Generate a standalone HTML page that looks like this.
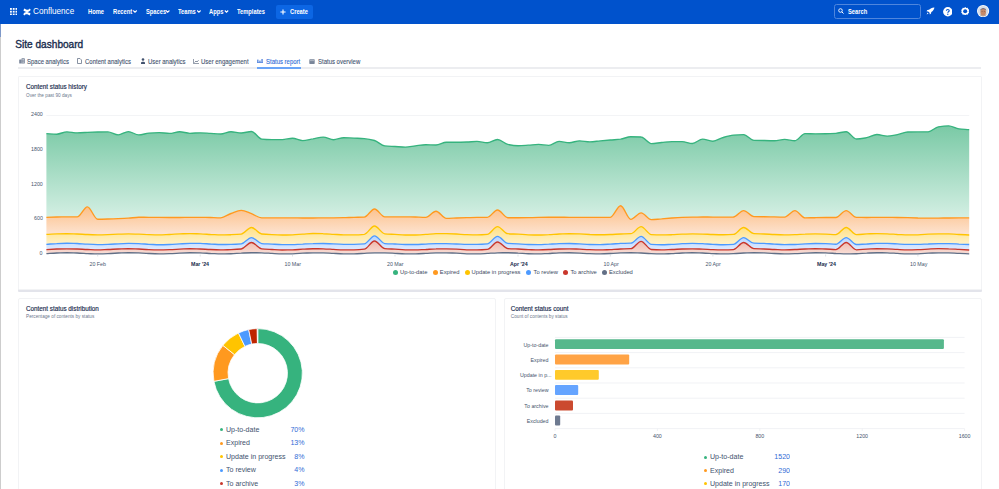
<!DOCTYPE html>
<html><head><meta charset="utf-8">
<style>
*{margin:0;padding:0;box-sizing:border-box}
html,body{width:999px;height:489px;overflow:hidden;background:#fff;font-family:"Liberation Sans",sans-serif;position:relative}
.a{position:absolute;white-space:nowrap}
#hdr{left:0;top:0;width:999px;height:24px;background:#0052CC}
.nav{color:#fff;font-weight:bold;font-size:6.6px;top:8px;line-height:8px;transform:scaleX(.87);transform-origin:0 0}
.card{background:#fff;border:1px solid #F2F3F5;border-radius:2px}
.ttl{font-size:6.3px;color:#172B4D;line-height:8px;-webkit-text-stroke:0.15px #172B4D}
.sub{font-size:4.7px;color:#6B778C;line-height:6px}
.tab{font-size:6.3px;color:#44546F;top:58px;line-height:8px;-webkit-text-stroke:0.1px currentColor;transform:scaleX(.95);transform-origin:0 0}
.ax{font-size:5.3px;color:#46546C;line-height:6px}
.lg{font-size:5.8px;color:#3B4A63;line-height:7px}
.dot{width:5px;height:5px;border-radius:50%}
.l2{font-size:7.5px;color:#42526E;line-height:9px;transform:scaleX(.94);transform-origin:0 0}
.pc{font-size:7.5px;color:#2F6BD6;line-height:9px;text-align:right;transform:scaleX(.94);transform-origin:100% 0}
.sd{width:3px;height:3px;border-radius:50%}
</style></head><body>
<div class="a" style="left:0;top:24px;width:1.2px;height:13px;background:#7E98C8"></div><div class="a" style="left:0;top:37px;width:1.2px;height:452px;background:#CDCDCD"></div>
<div id="hdr" class="a">
  <!-- grid icon -->
  <svg class="a" style="left:9.8px;top:7.8px" width="7.4" height="7.4" viewBox="0 0 8 8" fill="#fff">
    <rect x="0" y="0" width="2" height="2"/><rect x="3" y="0" width="2" height="2"/><rect x="6" y="0" width="2" height="2"/>
    <rect x="0" y="3" width="2" height="2"/><rect x="3" y="3" width="2" height="2"/><rect x="6" y="3" width="2" height="2"/>
    <rect x="0" y="6" width="2" height="2"/><rect x="3" y="6" width="2" height="2"/><rect x="6" y="6" width="2" height="2"/>
  </svg>
  <!-- confluence logo -->
  <svg class="a" style="left:23px;top:8px" width="8" height="8" viewBox="0 0 8 8" fill="#fff">
    <path d="M0.3,6.2 C1.8,3.6 4,3.4 7.6,5.6 L6.7,7.4 C4,5.8 2.8,5.6 1.3,7.6 Z"/>
    <path d="M7.7,1.8 C6.2,4.4 4,4.6 0.4,2.4 L1.3,0.6 C4,2.2 5.2,2.4 6.7,0.4 Z"/>
  </svg>
  <div class="a" style="left:33px;top:6px;font-size:8.8px;color:#fff;line-height:11px;transform:scaleX(.925);transform-origin:0 0">Confluence</div>
  <div class="a nav" style="left:88px">Home</div>
  <div class="a nav" style="left:113px">Recent</div>
  <div class="a nav" style="left:146px">Spaces</div>
  <div class="a nav" style="left:178px">Teams</div>
  <div class="a nav" style="left:209px">Apps</div>
  <div class="a nav" style="left:237px">Templates</div>
  <svg class="a" style="left:0;top:0" width="320" height="24" viewBox="0 0 320 24" fill="none" stroke="#fff" stroke-width="1.1"><path d="M133.3,10.5L135,12.3L136.7,10.5M166,10.5L167.7,12.3L169.4,10.5M197.2,10.5L198.9,12.3L200.6,10.5M224.8,10.5L226.5,12.3L228.2,10.5"/></svg>
  <div class="a" style="left:276px;top:5px;width:37px;height:14px;background:#0C66E4;border-radius:2px"></div>
  <svg class="a" style="left:280px;top:9px" width="6" height="6" viewBox="0 0 6 6" stroke="#fff" stroke-width="1.1"><path d="M3,0.4V5.6M0.4,3H5.6"/></svg>
  <div class="a nav" style="left:290px">Create</div>
  <!-- search -->
  <div class="a" style="left:834px;top:4px;width:87px;height:14.5px;border:1px solid #4F86DD;border-radius:2.5px;background:#0052CC"></div>
  <svg class="a" style="left:838px;top:8px" width="6" height="6" viewBox="0 0 6 6"><circle cx="2.5" cy="2.5" r="1.8" fill="none" stroke="#fff" stroke-width="0.9"/><path d="M3.8,3.8 L5.5,5.5" stroke="#fff" stroke-width="1"/></svg>
  <div class="a nav" style="left:848px">Search</div>
  <!-- icons -->
  <svg class="a" style="left:926px;top:7px" width="9" height="8" viewBox="0 0 9 8" fill="#fff"><path d="M8.4,0.4C6.2,0.3 4.3,1.2 3,2.8L1.4,3L0.5,4.2L2.2,4.5L3.6,5.8L3.8,7.5L5,6.6L5.3,5C7,3.8 8.3,2.3 8.4,0.4Z"/><path d="M1.6,5.6L0.6,7.4L2.5,6.5Z"/></svg>
  <svg class="a" style="left:942.8px;top:7px" width="9.6" height="9.6" viewBox="0 0 10 10"><circle cx="5" cy="5" r="4.9" fill="#fff"/><path d="M3.5,3.9C3.5,2.1 6.5,2.1 6.5,3.9C6.5,5 5,5 5,6.1" fill="none" stroke="#0052CC" stroke-width="1.15"/><circle cx="5" cy="7.6" r="0.7" fill="#0052CC"/></svg>
  <svg class="a" style="left:960.8px;top:7px" width="8.4" height="8.4" viewBox="0 0 10 10"><g fill="#fff"><path d="M5,0.2L6.2,1.4L7.9,1.1L8.6,2.7L9.8,3.8L9.2,5.4L9.8,6.9L8.6,8L7.9,9.6L6.2,9.3L5,10.5L3.8,9.3L2.1,9.6L1.4,8L0.2,6.9L0.8,5.4L0.2,3.8L1.4,2.7L2.1,1.1L3.8,1.4Z" transform="translate(0,-0.3)"/></g><circle cx="5" cy="5" r="2.4" fill="#0052CC"/></svg>
  <svg class="a" style="left:977.4px;top:5.2px" width="12.2" height="12.2" viewBox="0 0 12 12"><circle cx="6" cy="6" r="6" fill="#fff"/><defs><clipPath id="avc"><circle cx="6" cy="6" r="5.2"/></clipPath></defs><g clip-path="url(#avc)"><rect width="12" height="12" fill="#D5DDE8"/><ellipse cx="6" cy="11.5" rx="4.5" ry="2.6" fill="#B9A49A"/><ellipse cx="6.1" cy="6.9" rx="2.8" ry="3.3" fill="#C58A69"/><path d="M3,5.8C2.7,2.4 9.1,2.2 9.2,5.6L8.5,4.6C7.2,3.7 5,3.7 3.6,4.6Z" fill="#4F4860"/><path d="M4.6,6.4H5.4M6.8,6.4H7.6" stroke="#5A3A2E" stroke-width="0.5"/></g></svg>
</div>

<div class="a" style="left:15.3px;top:39.2px;font-size:10.1px;color:#172B4D;line-height:12px;-webkit-text-stroke:0.35px #172B4D">Site dashboard</div>

<!-- tabs -->
<div class="a" style="left:18px;top:67.4px;width:963px;height:1.6px;background:#ECEDF0"></div>
<div class="a" style="left:256.8px;top:67.4px;width:44.5px;height:1.2px;background:#6AA4F7"></div>
<svg class="a" style="left:19px;top:57.8px" width="6" height="6" viewBox="0 0 6 6"><rect x="0.2" y="1.6" width="2.4" height="4" rx="0.5" fill="#7A869A"/><rect x="2.5" y="0.2" width="3.3" height="5.4" rx="0.6" fill="#7A869A"/><path d="M3.3,1.5H5M3.3,2.9H5M3.3,4.3H5" stroke="#fff" stroke-width="0.5"/></svg>
<div class="a tab" style="left:27px">Space analytics</div>
<svg class="a" style="left:77px;top:58px" width="5" height="6" viewBox="0 0 5 6"><path d="M0.5,0.5H3L4.5,2V5.5H0.5Z" fill="none" stroke="#6B778C" stroke-width="0.8"/></svg>
<div class="a tab" style="left:85px">Content analytics</div>
<svg class="a" style="left:140.5px;top:58px" width="4" height="6" viewBox="0 0 4 6" fill="#42526E"><circle cx="2" cy="1.5" r="1.3"/><path d="M0,6V4.5C0,3.5 4,3.5 4,4.5V6Z"/></svg>
<div class="a tab" style="left:148px">User analytics</div>
<svg class="a" style="left:193px;top:58.5px" width="6" height="5" viewBox="0 0 6 5"><path d="M0.4,0V4.6H6M1.5,3.5L3,2L4,3L5.6,1.2" fill="none" stroke="#6B778C" stroke-width="0.8"/></svg>
<div class="a tab" style="left:201px">User engagement</div>
<svg class="a" style="left:256.8px;top:58.8px" width="6" height="4.2" viewBox="0 0 6 4.2" fill="#2F6BD6"><rect x="0" y="3.4" width="6" height="0.8"/><rect x="0.3" y="0.6" width="1.1" height="3"/><rect x="2.4" y="1.6" width="1.1" height="2"/><rect x="4.5" y="0" width="1.1" height="3.6"/></svg>
<div class="a tab" style="left:266px;color:#2F6BD6">Status report</div>
<svg class="a" style="left:309px;top:58.5px" width="6" height="5" viewBox="0 0 6 5"><rect x="0.3" y="0.3" width="5.4" height="4.6" rx="0.6" fill="#7A869A"/><path d="M0.8,1.6H5.2" stroke="#fff" stroke-width="0.4"/></svg>
<div class="a tab" style="left:317.5px">Status overview</div>

<!-- card 1 -->
<div class="a card" style="left:18.4px;top:76.3px;width:963.3px;height:213.3px;box-shadow:0 2px 0 #E3E4EB;border-radius:1px"></div>
<div class="a ttl" style="left:26px;top:83.4px">Content status history</div>
<div class="a sub" style="left:26px;top:93px">Over the past 90 days</div>

<svg class="a" style="left:0;top:0" width="999" height="489" viewBox="0 0 999 489">
<defs>
<linearGradient id="gG" x1="0" y1="125" x2="0" y2="220" gradientUnits="userSpaceOnUse"><stop offset="0" stop-color="#79C9A5"/><stop offset="1" stop-color="#D6F0E5"/></linearGradient>
<linearGradient id="gO" x1="0" y1="206" x2="0" y2="234" gradientUnits="userSpaceOnUse"><stop offset="0" stop-color="#FCBF87"/><stop offset="1" stop-color="#FDE3D0"/></linearGradient>
<linearGradient id="gY" x1="0" y1="226" x2="0" y2="244" gradientUnits="userSpaceOnUse"><stop offset="0" stop-color="#FFE083"/><stop offset="1" stop-color="#FFF1C7"/></linearGradient>
<linearGradient id="gB" x1="0" y1="236" x2="0" y2="250" gradientUnits="userSpaceOnUse"><stop offset="0" stop-color="#B8D4FF"/><stop offset="1" stop-color="#DEEBFF"/></linearGradient>
<linearGradient id="gR" x1="0" y1="241" x2="0" y2="253" gradientUnits="userSpaceOnUse"><stop offset="0" stop-color="#EFB9AC"/><stop offset="1" stop-color="#F8DCD4"/></linearGradient>
<linearGradient id="gE" x1="0" y1="250" x2="0" y2="253" gradientUnits="userSpaceOnUse"><stop offset="0" stop-color="#C9CED8"/><stop offset="1" stop-color="#EEF0F3"/></linearGradient>
</defs>
<g stroke="#EBECF0" stroke-width="0.6">
<path d="M46.4,115.5H969.2"/>
</g>
<path d="M46.4,133.6C49.8,133.8,53.2,134.2,56.7,134.2C60.1,134.2,63.5,131.8,66.9,131.8C70.3,131.8,73.7,132.8,77.2,132.8C80.6,132.8,84.0,132.5,87.4,132.3C90.8,132.2,94.2,132.1,97.7,132.0C101.1,131.9,104.5,131.9,107.9,131.9C111.3,131.9,114.8,134.8,118.2,134.8C121.6,134.8,125.0,131.6,128.4,131.6C131.8,131.6,135.3,134.9,138.7,134.9C142.1,134.9,145.5,133.4,148.9,133.1C152.4,132.8,155.8,132.6,159.2,132.6C162.6,132.6,166.0,133.4,169.4,133.4C172.9,133.4,176.3,131.7,179.7,131.7C183.1,131.7,186.5,133.3,189.9,133.3C193.4,133.3,196.8,132.8,200.2,132.8C203.6,132.8,207.0,133.2,210.5,133.4C213.9,133.6,217.3,134.0,220.7,134.0C224.1,134.0,227.5,131.7,231.0,131.7C234.4,131.7,237.8,133.0,241.2,133.0C244.6,133.0,248.0,131.5,251.5,131.5C254.9,131.5,258.3,138.8,261.7,139.1C265.1,139.5,268.6,139.6,272.0,139.6C275.4,139.6,278.8,139.6,282.2,139.6C285.6,139.6,289.1,138.2,292.5,138.2C295.9,138.2,299.3,140.6,302.7,140.6C306.2,140.6,309.6,139.4,313.0,138.9C316.4,138.3,319.8,137.1,323.2,137.1C326.7,137.1,330.1,139.7,333.5,139.7C336.9,139.7,340.3,137.7,343.7,137.7C347.2,137.7,350.6,138.0,354.0,138.1C357.4,138.3,360.8,138.4,364.3,138.7C367.7,139.0,371.1,139.6,374.5,140.5C377.9,141.4,381.3,145.6,384.8,145.9C388.2,146.3,391.6,146.3,395.0,146.5C398.4,146.7,401.8,147.1,405.3,147.1C408.7,147.1,412.1,146.2,415.5,145.8C418.9,145.4,422.4,144.7,425.8,144.7C429.2,144.7,432.6,145.0,436.0,145.0C439.4,145.0,442.9,142.2,446.3,142.2C449.7,142.2,453.1,142.2,456.5,142.2C460.0,142.2,463.4,142.1,466.8,142.0C470.2,141.9,473.6,141.4,477.0,141.4C480.5,141.4,483.9,142.7,487.3,142.7C490.7,142.7,494.1,139.5,497.5,139.5C501.0,139.5,504.4,143.7,507.8,144.4C511.2,145.1,514.6,145.7,518.1,145.7C521.5,145.7,524.9,145.4,528.3,145.2C531.7,145.0,535.1,144.4,538.6,144.4C542.0,144.4,545.4,145.3,548.8,145.3C552.2,145.3,555.6,141.4,559.1,141.4C562.5,141.4,565.9,142.7,569.3,142.7C572.7,142.7,576.2,140.8,579.6,140.8C583.0,140.8,586.4,141.8,589.8,141.8C593.2,141.8,596.7,141.2,600.1,140.9C603.5,140.6,606.9,140.3,610.3,140.0C613.8,139.7,617.2,139.6,620.6,139.2C624.0,138.7,627.4,136.7,630.8,136.7C634.3,136.7,637.7,136.8,641.1,137.0C644.5,137.1,647.9,143.6,651.3,143.6C654.8,143.6,658.2,142.8,661.6,142.5C665.0,142.2,668.4,141.6,671.9,141.6C675.3,141.6,678.7,141.6,682.1,141.6C685.5,141.6,688.9,143.5,692.4,143.5C695.8,143.5,699.2,139.1,702.6,139.1C706.0,139.1,709.4,141.2,712.9,141.2C716.3,141.2,719.7,138.4,723.1,137.5C726.5,136.5,730.0,135.4,733.4,135.1C736.8,134.8,740.2,134.6,743.6,134.6C747.0,134.6,750.5,140.3,753.9,140.4C757.3,140.5,760.7,140.5,764.1,140.5C767.6,140.6,771.0,140.7,774.4,140.7C777.8,140.7,781.2,139.4,784.6,139.4C788.1,139.4,791.5,140.7,794.9,140.7C798.3,140.7,801.7,133.6,805.1,133.6C808.6,133.6,812.0,133.8,815.4,133.8C818.8,133.8,822.2,133.8,825.7,133.7C829.1,133.7,832.5,133.5,835.9,133.3C839.3,133.1,842.7,131.7,846.2,131.7C849.6,131.7,853.0,139.0,856.4,139.0C859.8,139.0,863.2,138.3,866.7,137.7C870.1,137.1,873.5,134.5,876.9,134.5C880.3,134.5,883.8,136.1,887.2,136.1C890.6,136.1,894.0,135.2,897.4,134.6C900.8,134.0,904.3,132.1,907.7,132.0C911.1,131.9,914.5,131.9,917.9,131.9C921.4,131.9,924.8,131.9,928.2,131.8C931.6,131.7,935.0,127.4,938.4,126.8C941.9,126.2,945.3,125.8,948.7,125.8C952.1,125.8,955.5,128.4,958.9,128.8C962.4,129.2,965.8,129.3,969.2,129.6L969.2,217.8C965.8,217.8,962.4,217.8,958.9,217.8C955.5,217.8,952.1,217.9,948.7,218.0C945.3,218.0,941.9,218.1,938.4,218.1C935.0,218.1,931.6,218.1,928.2,218.1C924.8,218.1,921.4,218.0,917.9,218.0C914.5,217.9,911.1,217.8,907.7,217.7C904.3,217.6,900.8,217.5,897.4,217.5C894.0,217.5,890.6,217.4,887.2,217.4C883.8,217.4,880.3,217.4,876.9,217.4C873.5,217.4,870.1,217.5,866.7,217.5C863.2,217.5,859.8,217.4,856.4,217.4C853.0,217.3,849.6,210.6,846.2,210.6C842.7,210.6,839.3,217.5,835.9,217.5C832.5,217.5,829.1,217.5,825.7,217.5C822.2,217.5,818.8,217.6,815.4,217.7C812.0,217.7,808.6,217.9,805.1,217.9C801.7,217.9,798.3,210.6,794.9,210.6C791.5,210.6,788.1,217.1,784.6,217.1C781.2,217.1,777.8,217.0,774.4,216.9C771.0,216.9,767.6,216.8,764.1,216.7C760.7,216.7,757.3,216.7,753.9,216.6C750.5,216.6,747.0,210.6,743.6,210.6C740.2,210.6,736.8,216.9,733.4,217.0C730.0,217.0,726.5,217.1,723.1,217.1C719.7,217.1,716.3,217.1,712.9,217.1C709.4,217.1,706.0,217.0,702.6,217.0C699.2,217.0,695.8,217.1,692.4,217.1C688.9,217.1,685.5,217.2,682.1,217.3C678.7,217.4,675.3,217.7,671.9,218.0C668.4,218.3,665.0,218.6,661.6,218.9C658.2,219.1,654.8,219.6,651.3,219.6C647.9,219.6,644.5,212.8,641.1,212.8C637.7,212.8,634.3,219.3,630.8,219.3C627.4,219.3,624.0,205.7,620.6,205.7C617.2,205.7,613.8,217.2,610.3,217.3C606.9,217.3,603.5,217.3,600.1,217.3C596.7,217.3,593.2,217.4,589.8,217.4C586.4,217.4,583.0,217.4,579.6,217.4C576.2,217.4,572.7,217.3,569.3,217.3C565.9,217.3,562.5,217.2,559.1,217.2C555.6,217.2,552.2,217.2,548.8,217.2C545.4,217.2,542.0,217.3,538.6,217.4C535.1,217.5,531.7,217.6,528.3,217.6C524.9,217.7,521.5,217.7,518.1,217.7C514.6,217.7,511.2,217.7,507.8,217.7C504.4,217.7,501.0,210.0,497.5,210.0C494.1,210.0,490.7,217.3,487.3,217.3C483.9,217.4,480.5,217.4,477.0,217.4C473.6,217.4,470.2,217.6,466.8,217.7C463.4,217.8,460.0,217.9,456.5,218.0C453.1,218.1,449.7,218.3,446.3,218.3C442.9,218.3,439.4,211.2,436.0,211.2C432.6,211.2,429.2,217.3,425.8,217.3C422.4,217.3,418.9,217.1,415.5,217.0C412.1,217.0,408.7,216.9,405.3,216.9C401.8,216.9,398.4,216.9,395.0,216.9C391.6,216.9,388.2,216.9,384.8,216.9C381.3,216.9,377.9,209.0,374.5,209.0C371.1,209.0,367.7,216.9,364.3,217.1C360.8,217.3,357.4,217.2,354.0,217.3C350.6,217.4,347.2,217.6,343.7,217.7C340.3,217.8,336.9,217.8,333.5,217.8C330.1,217.8,326.7,217.9,323.2,217.9C319.8,217.9,316.4,218.0,313.0,218.0C309.6,218.0,306.2,218.0,302.7,218.0C299.3,218.0,295.9,217.9,292.5,217.9C289.1,217.9,285.6,217.8,282.2,217.8C278.8,217.8,275.4,217.8,272.0,217.8C268.6,217.8,265.1,217.9,261.7,217.9C258.3,217.9,254.9,215.0,251.5,213.7C248.0,212.4,244.6,210.3,241.2,210.3C237.8,210.3,234.4,212.3,231.0,213.5C227.5,214.7,224.1,217.8,220.7,217.8C217.3,217.8,213.9,217.6,210.5,217.5C207.0,217.5,203.6,217.4,200.2,217.4C196.8,217.4,193.4,217.4,189.9,217.4C186.5,217.4,183.1,217.5,179.7,217.5C176.3,217.5,172.9,217.5,169.4,217.5C166.0,217.5,162.6,217.5,159.2,217.4C155.8,217.4,152.4,217.3,148.9,217.3C145.5,217.3,142.1,217.2,138.7,217.2C135.3,217.2,131.8,218.0,128.4,218.2C125.0,218.4,121.6,218.5,118.2,218.6C114.8,218.7,111.3,218.9,107.9,219.0C104.5,219.1,101.1,219.2,97.7,219.2C94.2,219.2,90.8,206.9,87.4,206.9C84.0,206.9,80.6,216.9,77.2,216.9C73.7,216.9,70.3,216.9,66.9,216.9C63.5,216.9,60.1,217.0,56.7,217.0C53.2,217.1,49.8,217.2,46.4,217.3Z" fill="url(#gG)" stroke="none"/>
<path d="M46.4,217.3C49.8,217.2,53.2,217.1,56.7,217.0C60.1,217.0,63.5,216.9,66.9,216.9C70.3,216.9,73.7,216.9,77.2,216.9C80.6,216.9,84.0,206.9,87.4,206.9C90.8,206.9,94.2,219.2,97.7,219.2C101.1,219.2,104.5,219.1,107.9,219.0C111.3,218.9,114.8,218.7,118.2,218.6C121.6,218.5,125.0,218.4,128.4,218.2C131.8,218.0,135.3,217.2,138.7,217.2C142.1,217.2,145.5,217.3,148.9,217.3C152.4,217.3,155.8,217.4,159.2,217.4C162.6,217.5,166.0,217.5,169.4,217.5C172.9,217.5,176.3,217.5,179.7,217.5C183.1,217.5,186.5,217.4,189.9,217.4C193.4,217.4,196.8,217.4,200.2,217.4C203.6,217.4,207.0,217.5,210.5,217.5C213.9,217.6,217.3,217.8,220.7,217.8C224.1,217.8,227.5,214.7,231.0,213.5C234.4,212.3,237.8,210.3,241.2,210.3C244.6,210.3,248.0,212.4,251.5,213.7C254.9,215.0,258.3,217.9,261.7,217.9C265.1,217.9,268.6,217.8,272.0,217.8C275.4,217.8,278.8,217.8,282.2,217.8C285.6,217.8,289.1,217.9,292.5,217.9C295.9,217.9,299.3,218.0,302.7,218.0C306.2,218.0,309.6,218.0,313.0,218.0C316.4,218.0,319.8,217.9,323.2,217.9C326.7,217.9,330.1,217.8,333.5,217.8C336.9,217.8,340.3,217.8,343.7,217.7C347.2,217.6,350.6,217.4,354.0,217.3C357.4,217.2,360.8,217.3,364.3,217.1C367.7,216.9,371.1,209.0,374.5,209.0C377.9,209.0,381.3,216.9,384.8,216.9C388.2,216.9,391.6,216.9,395.0,216.9C398.4,216.9,401.8,216.9,405.3,216.9C408.7,216.9,412.1,217.0,415.5,217.0C418.9,217.1,422.4,217.3,425.8,217.3C429.2,217.3,432.6,211.2,436.0,211.2C439.4,211.2,442.9,218.3,446.3,218.3C449.7,218.3,453.1,218.1,456.5,218.0C460.0,217.9,463.4,217.8,466.8,217.7C470.2,217.6,473.6,217.4,477.0,217.4C480.5,217.4,483.9,217.4,487.3,217.3C490.7,217.3,494.1,210.0,497.5,210.0C501.0,210.0,504.4,217.7,507.8,217.7C511.2,217.7,514.6,217.7,518.1,217.7C521.5,217.7,524.9,217.7,528.3,217.6C531.7,217.6,535.1,217.5,538.6,217.4C542.0,217.3,545.4,217.2,548.8,217.2C552.2,217.2,555.6,217.2,559.1,217.2C562.5,217.2,565.9,217.3,569.3,217.3C572.7,217.3,576.2,217.4,579.6,217.4C583.0,217.4,586.4,217.4,589.8,217.4C593.2,217.4,596.7,217.3,600.1,217.3C603.5,217.3,606.9,217.3,610.3,217.3C613.8,217.2,617.2,205.7,620.6,205.7C624.0,205.7,627.4,219.3,630.8,219.3C634.3,219.3,637.7,212.8,641.1,212.8C644.5,212.8,647.9,219.6,651.3,219.6C654.8,219.6,658.2,219.1,661.6,218.9C665.0,218.6,668.4,218.3,671.9,218.0C675.3,217.7,678.7,217.4,682.1,217.3C685.5,217.2,688.9,217.1,692.4,217.1C695.8,217.1,699.2,217.0,702.6,217.0C706.0,217.0,709.4,217.1,712.9,217.1C716.3,217.1,719.7,217.1,723.1,217.1C726.5,217.1,730.0,217.0,733.4,217.0C736.8,216.9,740.2,210.6,743.6,210.6C747.0,210.6,750.5,216.6,753.9,216.6C757.3,216.7,760.7,216.7,764.1,216.7C767.6,216.8,771.0,216.9,774.4,216.9C777.8,217.0,781.2,217.1,784.6,217.1C788.1,217.1,791.5,210.6,794.9,210.6C798.3,210.6,801.7,217.9,805.1,217.9C808.6,217.9,812.0,217.7,815.4,217.7C818.8,217.6,822.2,217.5,825.7,217.5C829.1,217.5,832.5,217.5,835.9,217.5C839.3,217.5,842.7,210.6,846.2,210.6C849.6,210.6,853.0,217.3,856.4,217.4C859.8,217.4,863.2,217.5,866.7,217.5C870.1,217.5,873.5,217.4,876.9,217.4C880.3,217.4,883.8,217.4,887.2,217.4C890.6,217.4,894.0,217.5,897.4,217.5C900.8,217.5,904.3,217.6,907.7,217.7C911.1,217.8,914.5,217.9,917.9,218.0C921.4,218.0,924.8,218.1,928.2,218.1C931.6,218.1,935.0,218.1,938.4,218.1C941.9,218.1,945.3,218.0,948.7,218.0C952.1,217.9,955.5,217.8,958.9,217.8C962.4,217.8,965.8,217.8,969.2,217.8L969.2,235.0C965.8,234.9,962.4,234.7,958.9,234.5C955.5,234.4,952.1,234.0,948.7,233.9C945.3,233.8,941.9,233.8,938.4,233.8C935.0,233.8,931.6,234.0,928.2,234.2C924.8,234.4,921.4,234.7,917.9,234.8C914.5,234.8,911.1,234.9,907.7,234.9C904.3,234.9,900.8,234.6,897.4,234.5C894.0,234.3,890.6,233.9,887.2,233.8C883.8,233.7,880.3,233.6,876.9,233.6C873.5,233.6,870.1,233.8,866.7,233.9C863.2,234.1,859.8,234.6,856.4,234.6C853.0,234.6,849.6,227.5,846.2,227.5C842.7,227.5,839.3,234.6,835.9,234.6C832.5,234.6,829.1,234.2,825.7,234.1C822.2,234.0,818.8,233.9,815.4,233.9C812.0,233.9,808.6,234.0,805.1,234.2C801.7,234.3,798.3,234.6,794.9,234.7C791.5,234.8,788.1,234.9,784.6,234.9C781.2,234.9,777.8,234.7,774.4,234.5C771.0,234.4,767.6,234.1,764.1,234.0C760.7,233.9,757.3,233.9,753.9,233.7C750.5,233.5,747.0,227.5,743.6,227.5C740.2,227.5,736.8,234.3,733.4,234.4C730.0,234.6,726.5,234.7,723.1,234.7C719.7,234.7,716.3,234.6,712.9,234.5C709.4,234.4,706.0,234.2,702.6,234.1C699.2,234.0,695.8,233.9,692.4,233.9C688.9,233.9,685.5,234.1,682.1,234.2C678.7,234.3,675.3,234.6,671.9,234.7C668.4,234.8,665.0,234.9,661.6,234.9C658.2,234.9,654.8,234.8,651.3,234.6C647.9,234.4,644.5,226.6,641.1,226.6C637.7,226.6,634.3,233.6,630.8,233.7C627.4,233.9,624.0,233.9,620.6,234.0C617.2,234.1,613.8,234.4,610.3,234.5C606.9,234.6,603.5,234.7,600.1,234.7C596.7,234.7,593.2,234.6,589.8,234.5C586.4,234.3,583.0,234.1,579.6,233.9C576.2,233.8,572.7,233.7,569.3,233.7C565.9,233.7,562.5,233.9,559.1,234.0C555.6,234.2,552.2,234.5,548.8,234.7C545.4,234.8,542.0,235.0,538.6,235.0C535.1,235.0,531.7,234.9,528.3,234.8C524.9,234.7,521.5,234.3,518.1,234.1C514.6,233.9,511.2,234.0,507.8,233.7C504.4,233.4,501.0,226.6,497.5,226.6C494.1,226.6,490.7,234.2,487.3,234.4C483.9,234.7,480.5,234.9,477.0,234.9C473.6,234.9,470.2,234.8,466.8,234.7C463.4,234.6,460.0,234.2,456.5,234.0C453.1,233.8,449.7,233.6,446.3,233.6C442.9,233.6,439.4,233.6,436.0,233.7C432.6,233.8,429.2,234.2,425.8,234.4C422.4,234.7,418.9,235.0,415.5,235.0C412.1,235.0,408.7,235.0,405.3,235.0C401.8,235.0,398.4,234.6,395.0,234.4C391.6,234.2,388.2,234.2,384.8,233.8C381.3,233.4,377.9,226.0,374.5,226.0C371.1,226.0,367.7,233.9,364.3,234.3C360.8,234.6,357.4,234.8,354.0,234.8C350.6,234.8,347.2,234.9,343.7,234.9C340.3,234.9,336.9,234.5,333.5,234.3C330.1,234.1,326.7,233.7,323.2,233.7C319.8,233.6,316.4,233.5,313.0,233.5C309.6,233.5,306.2,233.9,302.7,234.1C299.3,234.3,295.9,234.7,292.5,234.8C289.1,234.9,285.6,235.0,282.2,235.0C278.8,235.0,275.4,234.8,272.0,234.6C268.6,234.5,265.1,234.4,261.7,234.0C258.3,233.6,254.9,227.5,251.5,227.5C248.0,227.5,244.6,233.8,241.2,234.1C237.8,234.5,234.4,234.6,231.0,234.7C227.5,234.8,224.1,234.9,220.7,234.9C217.3,234.9,213.9,234.6,210.5,234.5C207.0,234.3,203.6,234.0,200.2,233.9C196.8,233.8,193.4,233.6,189.9,233.6C186.5,233.6,183.1,233.8,179.7,233.9C176.3,234.0,172.9,234.4,169.4,234.5C166.0,234.6,162.6,234.8,159.2,234.8C155.8,234.8,152.4,234.7,148.9,234.6C145.5,234.5,142.1,234.3,138.7,234.2C135.3,234.1,131.8,233.9,128.4,233.9C125.0,233.9,121.6,234.1,118.2,234.2C114.8,234.3,111.3,234.5,107.9,234.6C104.5,234.7,101.1,234.8,97.7,234.8C94.2,234.8,90.8,234.7,87.4,234.5C84.0,234.4,80.6,234.1,77.2,234.0C73.7,233.9,70.3,233.7,66.9,233.7C63.5,233.7,60.1,233.8,56.7,233.9C53.2,234.0,49.8,234.3,46.4,234.4Z" fill="url(#gO)" stroke="none"/>
<path d="M46.4,234.4C49.8,234.3,53.2,234.0,56.7,233.9C60.1,233.8,63.5,233.7,66.9,233.7C70.3,233.7,73.7,233.9,77.2,234.0C80.6,234.1,84.0,234.4,87.4,234.5C90.8,234.7,94.2,234.8,97.7,234.8C101.1,234.8,104.5,234.7,107.9,234.6C111.3,234.5,114.8,234.3,118.2,234.2C121.6,234.1,125.0,233.9,128.4,233.9C131.8,233.9,135.3,234.1,138.7,234.2C142.1,234.3,145.5,234.5,148.9,234.6C152.4,234.7,155.8,234.8,159.2,234.8C162.6,234.8,166.0,234.6,169.4,234.5C172.9,234.4,176.3,234.0,179.7,233.9C183.1,233.8,186.5,233.6,189.9,233.6C193.4,233.6,196.8,233.8,200.2,233.9C203.6,234.0,207.0,234.3,210.5,234.5C213.9,234.6,217.3,234.9,220.7,234.9C224.1,234.9,227.5,234.8,231.0,234.7C234.4,234.6,237.8,234.5,241.2,234.1C244.6,233.8,248.0,227.5,251.5,227.5C254.9,227.5,258.3,233.6,261.7,234.0C265.1,234.4,268.6,234.5,272.0,234.6C275.4,234.8,278.8,235.0,282.2,235.0C285.6,235.0,289.1,234.9,292.5,234.8C295.9,234.7,299.3,234.3,302.7,234.1C306.2,233.9,309.6,233.5,313.0,233.5C316.4,233.5,319.8,233.6,323.2,233.7C326.7,233.7,330.1,234.1,333.5,234.3C336.9,234.5,340.3,234.9,343.7,234.9C347.2,234.9,350.6,234.8,354.0,234.8C357.4,234.8,360.8,234.6,364.3,234.3C367.7,233.9,371.1,226.0,374.5,226.0C377.9,226.0,381.3,233.4,384.8,233.8C388.2,234.2,391.6,234.2,395.0,234.4C398.4,234.6,401.8,235.0,405.3,235.0C408.7,235.0,412.1,235.0,415.5,235.0C418.9,235.0,422.4,234.7,425.8,234.4C429.2,234.2,432.6,233.8,436.0,233.7C439.4,233.6,442.9,233.6,446.3,233.6C449.7,233.6,453.1,233.8,456.5,234.0C460.0,234.2,463.4,234.6,466.8,234.7C470.2,234.8,473.6,234.9,477.0,234.9C480.5,234.9,483.9,234.7,487.3,234.4C490.7,234.2,494.1,226.6,497.5,226.6C501.0,226.6,504.4,233.4,507.8,233.7C511.2,234.0,514.6,233.9,518.1,234.1C521.5,234.3,524.9,234.7,528.3,234.8C531.7,234.9,535.1,235.0,538.6,235.0C542.0,235.0,545.4,234.8,548.8,234.7C552.2,234.5,555.6,234.2,559.1,234.0C562.5,233.9,565.9,233.7,569.3,233.7C572.7,233.7,576.2,233.8,579.6,233.9C583.0,234.1,586.4,234.3,589.8,234.5C593.2,234.6,596.7,234.7,600.1,234.7C603.5,234.7,606.9,234.6,610.3,234.5C613.8,234.4,617.2,234.1,620.6,234.0C624.0,233.9,627.4,233.9,630.8,233.7C634.3,233.6,637.7,226.6,641.1,226.6C644.5,226.6,647.9,234.4,651.3,234.6C654.8,234.8,658.2,234.9,661.6,234.9C665.0,234.9,668.4,234.8,671.9,234.7C675.3,234.6,678.7,234.3,682.1,234.2C685.5,234.1,688.9,233.9,692.4,233.9C695.8,233.9,699.2,234.0,702.6,234.1C706.0,234.2,709.4,234.4,712.9,234.5C716.3,234.6,719.7,234.7,723.1,234.7C726.5,234.7,730.0,234.6,733.4,234.4C736.8,234.3,740.2,227.5,743.6,227.5C747.0,227.5,750.5,233.5,753.9,233.7C757.3,233.9,760.7,233.9,764.1,234.0C767.6,234.1,771.0,234.4,774.4,234.5C777.8,234.7,781.2,234.9,784.6,234.9C788.1,234.9,791.5,234.8,794.9,234.7C798.3,234.6,801.7,234.3,805.1,234.2C808.6,234.0,812.0,233.9,815.4,233.9C818.8,233.9,822.2,234.0,825.7,234.1C829.1,234.2,832.5,234.6,835.9,234.6C839.3,234.6,842.7,227.5,846.2,227.5C849.6,227.5,853.0,234.6,856.4,234.6C859.8,234.6,863.2,234.1,866.7,233.9C870.1,233.8,873.5,233.6,876.9,233.6C880.3,233.6,883.8,233.7,887.2,233.8C890.6,233.9,894.0,234.3,897.4,234.5C900.8,234.6,904.3,234.9,907.7,234.9C911.1,234.9,914.5,234.8,917.9,234.8C921.4,234.7,924.8,234.4,928.2,234.2C931.6,234.0,935.0,233.8,938.4,233.8C941.9,233.8,945.3,233.8,948.7,233.9C952.1,234.0,955.5,234.4,958.9,234.5C962.4,234.7,965.8,234.9,969.2,235.0L969.2,244.5C965.8,244.4,962.4,244.2,958.9,244.1C955.5,243.9,952.1,243.6,948.7,243.6C945.3,243.6,941.9,243.6,938.4,243.6C935.0,243.6,931.6,243.8,928.2,244.0C924.8,244.1,921.4,244.4,917.9,244.4C914.5,244.4,911.1,244.4,907.7,244.4C904.3,244.4,900.8,244.1,897.4,243.9C894.0,243.7,890.6,243.4,887.2,243.4C883.8,243.4,880.3,243.4,876.9,243.4C873.5,243.4,870.1,243.8,866.7,244.0C863.2,244.1,859.8,244.5,856.4,244.5C853.0,244.5,849.6,237.6,846.2,237.6C842.7,237.6,839.3,244.2,835.9,244.2C832.5,244.2,829.1,243.7,825.7,243.6C822.2,243.5,818.8,243.5,815.4,243.5C812.0,243.5,808.6,243.7,805.1,243.9C801.7,244.1,798.3,244.4,794.9,244.5C791.5,244.5,788.1,244.6,784.6,244.6C781.2,244.6,777.8,244.3,774.4,244.1C771.0,243.9,767.6,243.6,764.1,243.4C760.7,243.3,757.3,243.4,753.9,243.2C750.5,243.1,747.0,237.6,743.6,237.6C740.2,237.6,736.8,244.2,733.4,244.4C730.0,244.6,726.5,244.7,723.1,244.7C719.7,244.7,716.3,244.5,712.9,244.4C709.4,244.2,706.0,243.9,702.6,243.7C699.2,243.6,695.8,243.4,692.4,243.4C688.9,243.4,685.5,243.6,682.1,243.7C678.7,243.9,675.3,244.2,671.9,244.4C668.4,244.5,665.0,244.7,661.6,244.7C658.2,244.7,654.8,244.6,651.3,244.4C647.9,244.2,644.5,236.4,641.1,236.4C637.7,236.4,634.3,243.1,630.8,243.2C627.4,243.4,624.0,243.3,620.6,243.4C617.2,243.6,613.8,243.9,610.3,244.1C606.9,244.3,603.5,244.6,600.1,244.6C596.7,244.6,593.2,244.6,589.8,244.5C586.4,244.4,583.0,244.1,579.6,243.9C576.2,243.8,572.7,243.5,569.3,243.5C565.9,243.5,562.5,243.5,559.1,243.6C555.6,243.7,552.2,244.0,548.8,244.2C545.4,244.3,542.0,244.6,538.6,244.6C535.1,244.6,531.7,244.6,528.3,244.5C524.9,244.5,521.5,244.1,518.1,243.9C514.6,243.8,511.2,243.7,507.8,243.4C504.4,243.1,501.0,236.4,497.5,236.4C494.1,236.4,490.7,243.6,487.3,243.9C483.9,244.2,480.5,244.4,477.0,244.4C473.6,244.4,470.2,244.4,466.8,244.4C463.4,244.4,460.0,244.1,456.5,244.0C453.1,243.9,449.7,243.6,446.3,243.6C442.9,243.6,439.4,243.6,436.0,243.6C432.6,243.6,429.2,243.9,425.8,244.1C422.4,244.2,418.9,244.5,415.5,244.5C412.1,244.5,408.7,244.5,405.3,244.5C401.8,244.5,398.4,244.2,395.0,244.0C391.6,243.9,388.2,243.9,384.8,243.6C381.3,243.3,377.9,235.8,374.5,235.8C371.1,235.8,367.7,243.6,364.3,243.9C360.8,244.2,357.4,244.3,354.0,244.3C350.6,244.3,347.2,244.3,343.7,244.3C340.3,244.3,336.9,244.1,333.5,243.9C330.1,243.8,326.7,243.5,323.2,243.5C319.8,243.5,316.4,243.5,313.0,243.6C309.6,243.6,306.2,243.9,302.7,244.1C299.3,244.2,295.9,244.5,292.5,244.6C289.1,244.6,285.6,244.6,282.2,244.6C278.8,244.6,275.4,244.3,272.0,244.1C268.6,243.9,265.1,243.9,261.7,243.6C258.3,243.3,254.9,237.6,251.5,237.6C248.0,237.6,244.6,243.6,241.2,243.9C237.8,244.2,234.4,244.4,231.0,244.4C227.5,244.4,224.1,244.5,220.7,244.5C217.3,244.5,213.9,244.1,210.5,244.0C207.0,243.8,203.6,243.5,200.2,243.4C196.8,243.4,193.4,243.4,189.9,243.4C186.5,243.4,183.1,243.7,179.7,243.9C176.3,244.1,172.9,244.4,169.4,244.5C166.0,244.6,162.6,244.7,159.2,244.7C155.8,244.7,152.4,244.4,148.9,244.3C145.5,244.1,142.1,243.7,138.7,243.6C135.3,243.5,131.8,243.4,128.4,243.4C125.0,243.4,121.6,243.6,118.2,243.8C114.8,244.0,111.3,244.3,107.9,244.4C104.5,244.5,101.1,244.6,97.7,244.6C94.2,244.6,90.8,244.4,87.4,244.2C84.0,244.0,80.6,243.7,77.2,243.5C73.7,243.4,70.3,243.2,66.9,243.2C63.5,243.2,60.1,243.4,56.7,243.6C53.2,243.7,49.8,244.1,46.4,244.3Z" fill="url(#gY)" stroke="none"/>
<path d="M46.4,244.3C49.8,244.1,53.2,243.7,56.7,243.6C60.1,243.4,63.5,243.2,66.9,243.2C70.3,243.2,73.7,243.4,77.2,243.5C80.6,243.7,84.0,244.0,87.4,244.2C90.8,244.4,94.2,244.6,97.7,244.6C101.1,244.6,104.5,244.5,107.9,244.4C111.3,244.3,114.8,244.0,118.2,243.8C121.6,243.6,125.0,243.4,128.4,243.4C131.8,243.4,135.3,243.5,138.7,243.6C142.1,243.7,145.5,244.1,148.9,244.3C152.4,244.4,155.8,244.7,159.2,244.7C162.6,244.7,166.0,244.6,169.4,244.5C172.9,244.4,176.3,244.1,179.7,243.9C183.1,243.7,186.5,243.4,189.9,243.4C193.4,243.4,196.8,243.4,200.2,243.4C203.6,243.5,207.0,243.8,210.5,244.0C213.9,244.1,217.3,244.5,220.7,244.5C224.1,244.5,227.5,244.4,231.0,244.4C234.4,244.4,237.8,244.2,241.2,243.9C244.6,243.6,248.0,237.6,251.5,237.6C254.9,237.6,258.3,243.3,261.7,243.6C265.1,243.9,268.6,243.9,272.0,244.1C275.4,244.3,278.8,244.6,282.2,244.6C285.6,244.6,289.1,244.6,292.5,244.6C295.9,244.5,299.3,244.2,302.7,244.1C306.2,243.9,309.6,243.6,313.0,243.6C316.4,243.5,319.8,243.5,323.2,243.5C326.7,243.5,330.1,243.8,333.5,243.9C336.9,244.1,340.3,244.3,343.7,244.3C347.2,244.3,350.6,244.3,354.0,244.3C357.4,244.3,360.8,244.2,364.3,243.9C367.7,243.6,371.1,235.8,374.5,235.8C377.9,235.8,381.3,243.3,384.8,243.6C388.2,243.9,391.6,243.9,395.0,244.0C398.4,244.2,401.8,244.5,405.3,244.5C408.7,244.5,412.1,244.5,415.5,244.5C418.9,244.5,422.4,244.2,425.8,244.1C429.2,243.9,432.6,243.6,436.0,243.6C439.4,243.6,442.9,243.6,446.3,243.6C449.7,243.6,453.1,243.9,456.5,244.0C460.0,244.1,463.4,244.4,466.8,244.4C470.2,244.4,473.6,244.4,477.0,244.4C480.5,244.4,483.9,244.2,487.3,243.9C490.7,243.6,494.1,236.4,497.5,236.4C501.0,236.4,504.4,243.1,507.8,243.4C511.2,243.7,514.6,243.8,518.1,243.9C521.5,244.1,524.9,244.5,528.3,244.5C531.7,244.6,535.1,244.6,538.6,244.6C542.0,244.6,545.4,244.3,548.8,244.2C552.2,244.0,555.6,243.7,559.1,243.6C562.5,243.5,565.9,243.5,569.3,243.5C572.7,243.5,576.2,243.8,579.6,243.9C583.0,244.1,586.4,244.4,589.8,244.5C593.2,244.6,596.7,244.6,600.1,244.6C603.5,244.6,606.9,244.3,610.3,244.1C613.8,243.9,617.2,243.6,620.6,243.4C624.0,243.3,627.4,243.4,630.8,243.2C634.3,243.1,637.7,236.4,641.1,236.4C644.5,236.4,647.9,244.2,651.3,244.4C654.8,244.6,658.2,244.7,661.6,244.7C665.0,244.7,668.4,244.5,671.9,244.4C675.3,244.2,678.7,243.9,682.1,243.7C685.5,243.6,688.9,243.4,692.4,243.4C695.8,243.4,699.2,243.6,702.6,243.7C706.0,243.9,709.4,244.2,712.9,244.4C716.3,244.5,719.7,244.7,723.1,244.7C726.5,244.7,730.0,244.6,733.4,244.4C736.8,244.2,740.2,237.6,743.6,237.6C747.0,237.6,750.5,243.1,753.9,243.2C757.3,243.4,760.7,243.3,764.1,243.4C767.6,243.6,771.0,243.9,774.4,244.1C777.8,244.3,781.2,244.6,784.6,244.6C788.1,244.6,791.5,244.5,794.9,244.5C798.3,244.4,801.7,244.1,805.1,243.9C808.6,243.7,812.0,243.5,815.4,243.5C818.8,243.5,822.2,243.5,825.7,243.6C829.1,243.7,832.5,244.2,835.9,244.2C839.3,244.2,842.7,237.6,846.2,237.6C849.6,237.6,853.0,244.5,856.4,244.5C859.8,244.5,863.2,244.1,866.7,244.0C870.1,243.8,873.5,243.4,876.9,243.4C880.3,243.4,883.8,243.4,887.2,243.4C890.6,243.4,894.0,243.7,897.4,243.9C900.8,244.1,904.3,244.4,907.7,244.4C911.1,244.4,914.5,244.4,917.9,244.4C921.4,244.4,924.8,244.1,928.2,244.0C931.6,243.8,935.0,243.6,938.4,243.6C941.9,243.6,945.3,243.6,948.7,243.6C952.1,243.6,955.5,243.9,958.9,244.1C962.4,244.2,965.8,244.4,969.2,244.5L969.2,250.0C965.8,249.8,962.4,249.6,958.9,249.4C955.5,249.2,952.1,248.8,948.7,248.8C945.3,248.7,941.9,248.6,938.4,248.6C935.0,248.6,931.6,248.9,928.2,249.1C924.8,249.3,921.4,249.6,917.9,249.7C914.5,249.8,911.1,249.9,907.7,249.9C904.3,249.9,900.8,249.6,897.4,249.4C894.0,249.3,890.6,249.0,887.2,248.9C883.8,248.8,880.3,248.7,876.9,248.7C873.5,248.7,870.1,249.0,866.7,249.1C863.2,249.3,859.8,249.8,856.4,249.8C853.0,249.8,849.6,242.5,846.2,242.5C842.7,242.5,839.3,249.6,835.9,249.6C832.5,249.6,829.1,249.1,825.7,249.0C822.2,248.9,818.8,248.7,815.4,248.7C812.0,248.7,808.6,248.9,805.1,249.0C801.7,249.1,798.3,249.4,794.9,249.5C791.5,249.7,788.1,249.8,784.6,249.8C781.2,249.8,777.8,249.6,774.4,249.5C771.0,249.4,767.6,249.1,764.1,249.0C760.7,248.9,757.3,248.9,753.9,248.7C750.5,248.6,747.0,242.5,743.6,242.5C740.2,242.5,736.8,249.4,733.4,249.6C730.0,249.8,726.5,249.9,723.1,249.9C719.7,249.9,716.3,249.8,712.9,249.6C709.4,249.5,706.0,249.2,702.6,249.1C699.2,249.0,695.8,248.8,692.4,248.8C688.9,248.8,685.5,248.9,682.1,249.0C678.7,249.1,675.3,249.4,671.9,249.5C668.4,249.6,665.0,249.8,661.6,249.8C658.2,249.8,654.8,249.7,651.3,249.5C647.9,249.3,644.5,241.3,641.1,241.3C637.7,241.3,634.3,248.5,630.8,248.7C627.4,248.9,624.0,248.9,620.6,249.0C617.2,249.1,613.8,249.4,610.3,249.6C606.9,249.7,603.5,249.9,600.1,249.9C596.7,249.9,593.2,249.8,589.8,249.7C586.4,249.6,583.0,249.3,579.6,249.1C576.2,249.0,572.7,248.8,569.3,248.8C565.9,248.8,562.5,248.9,559.1,249.0C555.6,249.1,552.2,249.4,548.8,249.5C545.4,249.7,542.0,249.9,538.6,249.9C535.1,249.9,531.7,249.7,528.3,249.6C524.9,249.5,521.5,249.2,518.1,249.0C514.6,248.9,511.2,248.9,507.8,248.6C504.4,248.4,501.0,242.0,497.5,242.0C494.1,242.0,490.7,249.2,487.3,249.4C483.9,249.7,480.5,249.9,477.0,249.9C473.6,249.9,470.2,249.9,466.8,249.8C463.4,249.7,460.0,249.4,456.5,249.2C453.1,249.0,449.7,248.8,446.3,248.8C442.9,248.8,439.4,248.8,436.0,248.9C432.6,248.9,429.2,249.3,425.8,249.5C422.4,249.6,418.9,249.9,415.5,249.9C412.1,249.9,408.7,249.9,405.3,249.8C401.8,249.8,398.4,249.4,395.0,249.2C391.6,249.0,388.2,249.0,384.8,248.6C381.3,248.3,377.9,241.0,374.5,241.0C371.1,241.0,367.7,248.8,364.3,249.2C360.8,249.6,357.4,249.8,354.0,249.8C350.6,249.9,347.2,249.9,343.7,249.9C340.3,249.9,336.9,249.6,333.5,249.4C330.1,249.2,326.7,248.9,323.2,248.8C319.8,248.8,316.4,248.7,313.0,248.7C309.6,248.7,306.2,249.1,302.7,249.2C299.3,249.4,295.9,249.8,292.5,249.9C289.1,249.9,285.6,250.0,282.2,250.0C278.8,250.0,275.4,249.7,272.0,249.5C268.6,249.3,265.1,249.2,261.7,248.8C258.3,248.4,254.9,242.5,251.5,242.5C248.0,242.5,244.6,248.6,241.2,249.0C237.8,249.4,234.4,249.5,231.0,249.6C227.5,249.7,224.1,249.9,220.7,249.9C217.3,249.9,213.9,249.7,210.5,249.5C207.0,249.4,203.6,249.1,200.2,249.0C196.8,248.9,193.4,248.7,189.9,248.7C186.5,248.7,183.1,249.0,179.7,249.1C176.3,249.3,172.9,249.6,169.4,249.7C166.0,249.8,162.6,249.9,159.2,249.9C155.8,249.9,152.4,249.8,148.9,249.6C145.5,249.5,142.1,249.2,138.7,249.0C135.3,248.9,131.8,248.7,128.4,248.7C125.0,248.7,121.6,248.9,118.2,249.0C114.8,249.1,111.3,249.4,107.9,249.5C104.5,249.6,101.1,249.8,97.7,249.8C94.2,249.8,90.8,249.6,87.4,249.5C84.0,249.4,80.6,249.1,77.2,249.0C73.7,248.9,70.3,248.8,66.9,248.8C63.5,248.8,60.1,248.9,56.7,249.0C53.2,249.2,49.8,249.4,46.4,249.6Z" fill="url(#gB)" stroke="none"/>
<path d="M46.4,249.6C49.8,249.4,53.2,249.2,56.7,249.0C60.1,248.9,63.5,248.8,66.9,248.8C70.3,248.8,73.7,248.9,77.2,249.0C80.6,249.1,84.0,249.4,87.4,249.5C90.8,249.6,94.2,249.8,97.7,249.8C101.1,249.8,104.5,249.6,107.9,249.5C111.3,249.4,114.8,249.1,118.2,249.0C121.6,248.9,125.0,248.7,128.4,248.7C131.8,248.7,135.3,248.9,138.7,249.0C142.1,249.2,145.5,249.5,148.9,249.6C152.4,249.8,155.8,249.9,159.2,249.9C162.6,249.9,166.0,249.8,169.4,249.7C172.9,249.6,176.3,249.3,179.7,249.1C183.1,249.0,186.5,248.7,189.9,248.7C193.4,248.7,196.8,248.9,200.2,249.0C203.6,249.1,207.0,249.4,210.5,249.5C213.9,249.7,217.3,249.9,220.7,249.9C224.1,249.9,227.5,249.7,231.0,249.6C234.4,249.5,237.8,249.4,241.2,249.0C244.6,248.6,248.0,242.5,251.5,242.5C254.9,242.5,258.3,248.4,261.7,248.8C265.1,249.2,268.6,249.3,272.0,249.5C275.4,249.7,278.8,250.0,282.2,250.0C285.6,250.0,289.1,249.9,292.5,249.9C295.9,249.8,299.3,249.4,302.7,249.2C306.2,249.1,309.6,248.7,313.0,248.7C316.4,248.7,319.8,248.8,323.2,248.8C326.7,248.9,330.1,249.2,333.5,249.4C336.9,249.6,340.3,249.9,343.7,249.9C347.2,249.9,350.6,249.9,354.0,249.8C357.4,249.8,360.8,249.6,364.3,249.2C367.7,248.8,371.1,241.0,374.5,241.0C377.9,241.0,381.3,248.3,384.8,248.6C388.2,249.0,391.6,249.0,395.0,249.2C398.4,249.4,401.8,249.8,405.3,249.8C408.7,249.9,412.1,249.9,415.5,249.9C418.9,249.9,422.4,249.6,425.8,249.5C429.2,249.3,432.6,248.9,436.0,248.9C439.4,248.8,442.9,248.8,446.3,248.8C449.7,248.8,453.1,249.0,456.5,249.2C460.0,249.4,463.4,249.7,466.8,249.8C470.2,249.9,473.6,249.9,477.0,249.9C480.5,249.9,483.9,249.7,487.3,249.4C490.7,249.2,494.1,242.0,497.5,242.0C501.0,242.0,504.4,248.4,507.8,248.6C511.2,248.9,514.6,248.9,518.1,249.0C521.5,249.2,524.9,249.5,528.3,249.6C531.7,249.7,535.1,249.9,538.6,249.9C542.0,249.9,545.4,249.7,548.8,249.5C552.2,249.4,555.6,249.1,559.1,249.0C562.5,248.9,565.9,248.8,569.3,248.8C572.7,248.8,576.2,249.0,579.6,249.1C583.0,249.3,586.4,249.6,589.8,249.7C593.2,249.8,596.7,249.9,600.1,249.9C603.5,249.9,606.9,249.7,610.3,249.6C613.8,249.4,617.2,249.1,620.6,249.0C624.0,248.9,627.4,248.9,630.8,248.7C634.3,248.5,637.7,241.3,641.1,241.3C644.5,241.3,647.9,249.3,651.3,249.5C654.8,249.7,658.2,249.8,661.6,249.8C665.0,249.8,668.4,249.6,671.9,249.5C675.3,249.4,678.7,249.1,682.1,249.0C685.5,248.9,688.9,248.8,692.4,248.8C695.8,248.8,699.2,249.0,702.6,249.1C706.0,249.2,709.4,249.5,712.9,249.6C716.3,249.8,719.7,249.9,723.1,249.9C726.5,249.9,730.0,249.8,733.4,249.6C736.8,249.4,740.2,242.5,743.6,242.5C747.0,242.5,750.5,248.6,753.9,248.7C757.3,248.9,760.7,248.9,764.1,249.0C767.6,249.1,771.0,249.4,774.4,249.5C777.8,249.6,781.2,249.8,784.6,249.8C788.1,249.8,791.5,249.7,794.9,249.5C798.3,249.4,801.7,249.1,805.1,249.0C808.6,248.9,812.0,248.7,815.4,248.7C818.8,248.7,822.2,248.9,825.7,249.0C829.1,249.1,832.5,249.6,835.9,249.6C839.3,249.6,842.7,242.5,846.2,242.5C849.6,242.5,853.0,249.8,856.4,249.8C859.8,249.8,863.2,249.3,866.7,249.1C870.1,249.0,873.5,248.7,876.9,248.7C880.3,248.7,883.8,248.8,887.2,248.9C890.6,249.0,894.0,249.3,897.4,249.4C900.8,249.6,904.3,249.9,907.7,249.9C911.1,249.9,914.5,249.8,917.9,249.7C921.4,249.6,924.8,249.3,928.2,249.1C931.6,248.9,935.0,248.6,938.4,248.6C941.9,248.6,945.3,248.7,948.7,248.8C952.1,248.8,955.5,249.2,958.9,249.4C962.4,249.6,965.8,249.8,969.2,250.0L969.2,253.8C965.8,253.7,962.4,253.5,958.9,253.3C955.5,253.2,952.1,252.8,948.7,252.8C945.3,252.8,941.9,252.8,938.4,252.8C935.0,252.8,931.6,253.1,928.2,253.2C924.8,253.4,921.4,253.7,917.9,253.8C914.5,253.8,911.1,253.9,907.7,253.9C904.3,253.9,900.8,253.6,897.4,253.4C894.0,253.2,890.6,252.9,887.2,252.8C883.8,252.8,880.3,252.7,876.9,252.7C873.5,252.7,870.1,253.0,866.7,253.2C863.2,253.3,859.8,253.7,856.4,253.7C853.0,253.8,849.6,253.9,846.2,253.9C842.7,253.9,839.3,253.6,835.9,253.5C832.5,253.3,829.1,253.0,825.7,252.9C822.2,252.8,818.8,252.7,815.4,252.7C812.0,252.7,808.6,252.9,805.1,253.1C801.7,253.3,798.3,253.6,794.9,253.7C791.5,253.8,788.1,253.9,784.6,253.9C781.2,253.9,777.8,253.7,774.4,253.5C771.0,253.4,767.6,253.1,764.1,252.9C760.7,252.8,757.3,252.7,753.9,252.7C750.5,252.7,747.0,252.9,743.6,253.0C740.2,253.2,736.8,253.5,733.4,253.6C730.0,253.8,726.5,253.9,723.1,253.9C719.7,253.9,716.3,253.7,712.9,253.6C709.4,253.4,706.0,253.1,702.6,253.0C699.2,252.9,695.8,252.7,692.4,252.7C688.9,252.7,685.5,252.9,682.1,253.0C678.7,253.1,675.3,253.4,671.9,253.6C668.4,253.7,665.0,253.9,661.6,253.9C658.2,253.9,654.8,253.8,651.3,253.6C647.9,253.5,644.5,253.2,641.1,253.0C637.7,252.9,634.3,252.7,630.8,252.7C627.4,252.7,624.0,252.8,620.6,252.9C617.2,253.1,613.8,253.4,610.3,253.5C606.9,253.7,603.5,253.9,600.1,253.9C596.7,253.9,593.2,253.8,589.8,253.7C586.4,253.6,583.0,253.3,579.6,253.1C576.2,252.9,572.7,252.7,569.3,252.7C565.9,252.7,562.5,252.8,559.1,252.9C555.6,253.0,552.2,253.3,548.8,253.5C545.4,253.6,542.0,253.9,538.6,253.9C535.1,253.9,531.7,253.8,528.3,253.7C524.9,253.7,521.5,253.3,518.1,253.2C514.6,253.0,511.2,252.7,507.8,252.7C504.4,252.7,501.0,252.8,497.5,252.8C494.1,252.9,490.7,253.2,487.3,253.4C483.9,253.6,480.5,253.9,477.0,253.9C473.6,253.9,470.2,253.8,466.8,253.8C463.4,253.7,460.0,253.4,456.5,253.2C453.1,253.1,449.7,252.8,446.3,252.8C442.9,252.8,439.4,252.8,436.0,252.8C432.6,252.8,429.2,253.2,425.8,253.3C422.4,253.5,418.9,253.8,415.5,253.8C412.1,253.8,408.7,253.8,405.3,253.8C401.8,253.8,398.4,253.5,395.0,253.3C391.6,253.1,388.2,252.8,384.8,252.8C381.3,252.8,377.9,252.8,374.5,252.8C371.1,252.8,367.7,253.1,364.3,253.3C360.8,253.5,357.4,253.8,354.0,253.8C350.6,253.8,347.2,253.8,343.7,253.8C340.3,253.8,336.9,253.5,333.5,253.3C330.1,253.2,326.7,252.8,323.2,252.8C319.8,252.8,316.4,252.8,313.0,252.8C309.6,252.8,306.2,253.1,302.7,253.2C299.3,253.4,295.9,253.7,292.5,253.8C289.1,253.8,285.6,253.9,282.2,253.9C278.8,253.9,275.4,253.6,272.0,253.4C268.6,253.2,265.1,252.9,261.7,252.8C258.3,252.8,254.9,252.7,251.5,252.7C248.0,252.7,244.6,253.0,241.2,253.2C237.8,253.3,234.4,253.7,231.0,253.7C227.5,253.8,224.1,253.9,220.7,253.9C217.3,253.9,213.9,253.6,210.5,253.5C207.0,253.3,203.6,253.0,200.2,252.9C196.8,252.8,193.4,252.7,189.9,252.7C186.5,252.7,183.1,252.9,179.7,253.1C176.3,253.3,172.9,253.6,169.4,253.7C166.0,253.8,162.6,253.9,159.2,253.9C155.8,253.9,152.4,253.7,148.9,253.5C145.5,253.4,142.1,253.1,138.7,252.9C135.3,252.8,131.8,252.7,128.4,252.7C125.0,252.7,121.6,252.9,118.2,253.0C114.8,253.2,111.3,253.5,107.9,253.6C104.5,253.8,101.1,253.9,97.7,253.9C94.2,253.9,90.8,253.7,87.4,253.6C84.0,253.4,80.6,253.1,77.2,253.0C73.7,252.9,70.3,252.7,66.9,252.7C63.5,252.7,60.1,252.9,56.7,253.0C53.2,253.1,49.8,253.4,46.4,253.6Z" fill="url(#gR)" stroke="none"/>
<path d="M46.4,253.6C49.8,253.4,53.2,253.1,56.7,253.0C60.1,252.9,63.5,252.7,66.9,252.7C70.3,252.7,73.7,252.9,77.2,253.0C80.6,253.1,84.0,253.4,87.4,253.6C90.8,253.7,94.2,253.9,97.7,253.9C101.1,253.9,104.5,253.8,107.9,253.6C111.3,253.5,114.8,253.2,118.2,253.0C121.6,252.9,125.0,252.7,128.4,252.7C131.8,252.7,135.3,252.8,138.7,252.9C142.1,253.1,145.5,253.4,148.9,253.5C152.4,253.7,155.8,253.9,159.2,253.9C162.6,253.9,166.0,253.8,169.4,253.7C172.9,253.6,176.3,253.3,179.7,253.1C183.1,252.9,186.5,252.7,189.9,252.7C193.4,252.7,196.8,252.8,200.2,252.9C203.6,253.0,207.0,253.3,210.5,253.5C213.9,253.6,217.3,253.9,220.7,253.9C224.1,253.9,227.5,253.8,231.0,253.7C234.4,253.7,237.8,253.3,241.2,253.2C244.6,253.0,248.0,252.7,251.5,252.7C254.9,252.7,258.3,252.8,261.7,252.8C265.1,252.9,268.6,253.2,272.0,253.4C275.4,253.6,278.8,253.9,282.2,253.9C285.6,253.9,289.1,253.8,292.5,253.8C295.9,253.7,299.3,253.4,302.7,253.2C306.2,253.1,309.6,252.8,313.0,252.8C316.4,252.8,319.8,252.8,323.2,252.8C326.7,252.8,330.1,253.2,333.5,253.3C336.9,253.5,340.3,253.8,343.7,253.8C347.2,253.8,350.6,253.8,354.0,253.8C357.4,253.8,360.8,253.5,364.3,253.3C367.7,253.1,371.1,252.8,374.5,252.8C377.9,252.8,381.3,252.8,384.8,252.8C388.2,252.8,391.6,253.1,395.0,253.3C398.4,253.5,401.8,253.8,405.3,253.8C408.7,253.8,412.1,253.8,415.5,253.8C418.9,253.8,422.4,253.5,425.8,253.3C429.2,253.2,432.6,252.8,436.0,252.8C439.4,252.8,442.9,252.8,446.3,252.8C449.7,252.8,453.1,253.1,456.5,253.2C460.0,253.4,463.4,253.7,466.8,253.8C470.2,253.8,473.6,253.9,477.0,253.9C480.5,253.9,483.9,253.6,487.3,253.4C490.7,253.2,494.1,252.9,497.5,252.8C501.0,252.8,504.4,252.7,507.8,252.7C511.2,252.7,514.6,253.0,518.1,253.2C521.5,253.3,524.9,253.7,528.3,253.7C531.7,253.8,535.1,253.9,538.6,253.9C542.0,253.9,545.4,253.6,548.8,253.5C552.2,253.3,555.6,253.0,559.1,252.9C562.5,252.8,565.9,252.7,569.3,252.7C572.7,252.7,576.2,252.9,579.6,253.1C583.0,253.3,586.4,253.6,589.8,253.7C593.2,253.8,596.7,253.9,600.1,253.9C603.5,253.9,606.9,253.7,610.3,253.5C613.8,253.4,617.2,253.1,620.6,252.9C624.0,252.8,627.4,252.7,630.8,252.7C634.3,252.7,637.7,252.9,641.1,253.0C644.5,253.2,647.9,253.5,651.3,253.6C654.8,253.8,658.2,253.9,661.6,253.9C665.0,253.9,668.4,253.7,671.9,253.6C675.3,253.4,678.7,253.1,682.1,253.0C685.5,252.9,688.9,252.7,692.4,252.7C695.8,252.7,699.2,252.9,702.6,253.0C706.0,253.1,709.4,253.4,712.9,253.6C716.3,253.7,719.7,253.9,723.1,253.9C726.5,253.9,730.0,253.8,733.4,253.6C736.8,253.5,740.2,253.2,743.6,253.0C747.0,252.9,750.5,252.7,753.9,252.7C757.3,252.7,760.7,252.8,764.1,252.9C767.6,253.1,771.0,253.4,774.4,253.5C777.8,253.7,781.2,253.9,784.6,253.9C788.1,253.9,791.5,253.8,794.9,253.7C798.3,253.6,801.7,253.3,805.1,253.1C808.6,252.9,812.0,252.7,815.4,252.7C818.8,252.7,822.2,252.8,825.7,252.9C829.1,253.0,832.5,253.3,835.9,253.5C839.3,253.6,842.7,253.9,846.2,253.9C849.6,253.9,853.0,253.8,856.4,253.7C859.8,253.7,863.2,253.3,866.7,253.2C870.1,253.0,873.5,252.7,876.9,252.7C880.3,252.7,883.8,252.8,887.2,252.8C890.6,252.9,894.0,253.2,897.4,253.4C900.8,253.6,904.3,253.9,907.7,253.9C911.1,253.9,914.5,253.8,917.9,253.8C921.4,253.7,924.8,253.4,928.2,253.2C931.6,253.1,935.0,252.8,938.4,252.8C941.9,252.8,945.3,252.8,948.7,252.8C952.1,252.8,955.5,253.2,958.9,253.3C962.4,253.5,965.8,253.7,969.2,253.8L969.2,254.0C965.8,254.0,962.4,254.0,958.9,254.0C955.5,254.0,952.1,254.0,948.7,254.0C945.3,254.0,941.9,254.0,938.4,254.0C935.0,254.0,931.6,254.0,928.2,254.0C924.8,254.0,921.4,254.0,917.9,254.0C914.5,254.0,911.1,254.0,907.7,254.0C904.3,254.0,900.8,254.0,897.4,254.0C894.0,254.0,890.6,254.0,887.2,254.0C883.8,254.0,880.3,254.0,876.9,254.0C873.5,254.0,870.1,254.0,866.7,254.0C863.2,254.0,859.8,254.0,856.4,254.0C853.0,254.0,849.6,254.0,846.2,254.0C842.7,254.0,839.3,254.0,835.9,254.0C832.5,254.0,829.1,254.0,825.7,254.0C822.2,254.0,818.8,254.0,815.4,254.0C812.0,254.0,808.6,254.0,805.1,254.0C801.7,254.0,798.3,254.0,794.9,254.0C791.5,254.0,788.1,254.0,784.6,254.0C781.2,254.0,777.8,254.0,774.4,254.0C771.0,254.0,767.6,254.0,764.1,254.0C760.7,254.0,757.3,254.0,753.9,254.0C750.5,254.0,747.0,254.0,743.6,254.0C740.2,254.0,736.8,254.0,733.4,254.0C730.0,254.0,726.5,254.0,723.1,254.0C719.7,254.0,716.3,254.0,712.9,254.0C709.4,254.0,706.0,254.0,702.6,254.0C699.2,254.0,695.8,254.0,692.4,254.0C688.9,254.0,685.5,254.0,682.1,254.0C678.7,254.0,675.3,254.0,671.9,254.0C668.4,254.0,665.0,254.0,661.6,254.0C658.2,254.0,654.8,254.0,651.3,254.0C647.9,254.0,644.5,254.0,641.1,254.0C637.7,254.0,634.3,254.0,630.8,254.0C627.4,254.0,624.0,254.0,620.6,254.0C617.2,254.0,613.8,254.0,610.3,254.0C606.9,254.0,603.5,254.0,600.1,254.0C596.7,254.0,593.2,254.0,589.8,254.0C586.4,254.0,583.0,254.0,579.6,254.0C576.2,254.0,572.7,254.0,569.3,254.0C565.9,254.0,562.5,254.0,559.1,254.0C555.6,254.0,552.2,254.0,548.8,254.0C545.4,254.0,542.0,254.0,538.6,254.0C535.1,254.0,531.7,254.0,528.3,254.0C524.9,254.0,521.5,254.0,518.1,254.0C514.6,254.0,511.2,254.0,507.8,254.0C504.4,254.0,501.0,254.0,497.5,254.0C494.1,254.0,490.7,254.0,487.3,254.0C483.9,254.0,480.5,254.0,477.0,254.0C473.6,254.0,470.2,254.0,466.8,254.0C463.4,254.0,460.0,254.0,456.5,254.0C453.1,254.0,449.7,254.0,446.3,254.0C442.9,254.0,439.4,254.0,436.0,254.0C432.6,254.0,429.2,254.0,425.8,254.0C422.4,254.0,418.9,254.0,415.5,254.0C412.1,254.0,408.7,254.0,405.3,254.0C401.8,254.0,398.4,254.0,395.0,254.0C391.6,254.0,388.2,254.0,384.8,254.0C381.3,254.0,377.9,254.0,374.5,254.0C371.1,254.0,367.7,254.0,364.3,254.0C360.8,254.0,357.4,254.0,354.0,254.0C350.6,254.0,347.2,254.0,343.7,254.0C340.3,254.0,336.9,254.0,333.5,254.0C330.1,254.0,326.7,254.0,323.2,254.0C319.8,254.0,316.4,254.0,313.0,254.0C309.6,254.0,306.2,254.0,302.7,254.0C299.3,254.0,295.9,254.0,292.5,254.0C289.1,254.0,285.6,254.0,282.2,254.0C278.8,254.0,275.4,254.0,272.0,254.0C268.6,254.0,265.1,254.0,261.7,254.0C258.3,254.0,254.9,254.0,251.5,254.0C248.0,254.0,244.6,254.0,241.2,254.0C237.8,254.0,234.4,254.0,231.0,254.0C227.5,254.0,224.1,254.0,220.7,254.0C217.3,254.0,213.9,254.0,210.5,254.0C207.0,254.0,203.6,254.0,200.2,254.0C196.8,254.0,193.4,254.0,189.9,254.0C186.5,254.0,183.1,254.0,179.7,254.0C176.3,254.0,172.9,254.0,169.4,254.0C166.0,254.0,162.6,254.0,159.2,254.0C155.8,254.0,152.4,254.0,148.9,254.0C145.5,254.0,142.1,254.0,138.7,254.0C135.3,254.0,131.8,254.0,128.4,254.0C125.0,254.0,121.6,254.0,118.2,254.0C114.8,254.0,111.3,254.0,107.9,254.0C104.5,254.0,101.1,254.0,97.7,254.0C94.2,254.0,90.8,254.0,87.4,254.0C84.0,254.0,80.6,254.0,77.2,254.0C73.7,254.0,70.3,254.0,66.9,254.0C63.5,254.0,60.1,254.0,56.7,254.0C53.2,254.0,49.8,254.0,46.4,254.0Z" fill="url(#gE)" stroke="none"/>
<path d="M46.4,133.6C49.8,133.8,53.2,134.2,56.7,134.2C60.1,134.2,63.5,131.8,66.9,131.8C70.3,131.8,73.7,132.8,77.2,132.8C80.6,132.8,84.0,132.5,87.4,132.3C90.8,132.2,94.2,132.1,97.7,132.0C101.1,131.9,104.5,131.9,107.9,131.9C111.3,131.9,114.8,134.8,118.2,134.8C121.6,134.8,125.0,131.6,128.4,131.6C131.8,131.6,135.3,134.9,138.7,134.9C142.1,134.9,145.5,133.4,148.9,133.1C152.4,132.8,155.8,132.6,159.2,132.6C162.6,132.6,166.0,133.4,169.4,133.4C172.9,133.4,176.3,131.7,179.7,131.7C183.1,131.7,186.5,133.3,189.9,133.3C193.4,133.3,196.8,132.8,200.2,132.8C203.6,132.8,207.0,133.2,210.5,133.4C213.9,133.6,217.3,134.0,220.7,134.0C224.1,134.0,227.5,131.7,231.0,131.7C234.4,131.7,237.8,133.0,241.2,133.0C244.6,133.0,248.0,131.5,251.5,131.5C254.9,131.5,258.3,138.8,261.7,139.1C265.1,139.5,268.6,139.6,272.0,139.6C275.4,139.6,278.8,139.6,282.2,139.6C285.6,139.6,289.1,138.2,292.5,138.2C295.9,138.2,299.3,140.6,302.7,140.6C306.2,140.6,309.6,139.4,313.0,138.9C316.4,138.3,319.8,137.1,323.2,137.1C326.7,137.1,330.1,139.7,333.5,139.7C336.9,139.7,340.3,137.7,343.7,137.7C347.2,137.7,350.6,138.0,354.0,138.1C357.4,138.3,360.8,138.4,364.3,138.7C367.7,139.0,371.1,139.6,374.5,140.5C377.9,141.4,381.3,145.6,384.8,145.9C388.2,146.3,391.6,146.3,395.0,146.5C398.4,146.7,401.8,147.1,405.3,147.1C408.7,147.1,412.1,146.2,415.5,145.8C418.9,145.4,422.4,144.7,425.8,144.7C429.2,144.7,432.6,145.0,436.0,145.0C439.4,145.0,442.9,142.2,446.3,142.2C449.7,142.2,453.1,142.2,456.5,142.2C460.0,142.2,463.4,142.1,466.8,142.0C470.2,141.9,473.6,141.4,477.0,141.4C480.5,141.4,483.9,142.7,487.3,142.7C490.7,142.7,494.1,139.5,497.5,139.5C501.0,139.5,504.4,143.7,507.8,144.4C511.2,145.1,514.6,145.7,518.1,145.7C521.5,145.7,524.9,145.4,528.3,145.2C531.7,145.0,535.1,144.4,538.6,144.4C542.0,144.4,545.4,145.3,548.8,145.3C552.2,145.3,555.6,141.4,559.1,141.4C562.5,141.4,565.9,142.7,569.3,142.7C572.7,142.7,576.2,140.8,579.6,140.8C583.0,140.8,586.4,141.8,589.8,141.8C593.2,141.8,596.7,141.2,600.1,140.9C603.5,140.6,606.9,140.3,610.3,140.0C613.8,139.7,617.2,139.6,620.6,139.2C624.0,138.7,627.4,136.7,630.8,136.7C634.3,136.7,637.7,136.8,641.1,137.0C644.5,137.1,647.9,143.6,651.3,143.6C654.8,143.6,658.2,142.8,661.6,142.5C665.0,142.2,668.4,141.6,671.9,141.6C675.3,141.6,678.7,141.6,682.1,141.6C685.5,141.6,688.9,143.5,692.4,143.5C695.8,143.5,699.2,139.1,702.6,139.1C706.0,139.1,709.4,141.2,712.9,141.2C716.3,141.2,719.7,138.4,723.1,137.5C726.5,136.5,730.0,135.4,733.4,135.1C736.8,134.8,740.2,134.6,743.6,134.6C747.0,134.6,750.5,140.3,753.9,140.4C757.3,140.5,760.7,140.5,764.1,140.5C767.6,140.6,771.0,140.7,774.4,140.7C777.8,140.7,781.2,139.4,784.6,139.4C788.1,139.4,791.5,140.7,794.9,140.7C798.3,140.7,801.7,133.6,805.1,133.6C808.6,133.6,812.0,133.8,815.4,133.8C818.8,133.8,822.2,133.8,825.7,133.7C829.1,133.7,832.5,133.5,835.9,133.3C839.3,133.1,842.7,131.7,846.2,131.7C849.6,131.7,853.0,139.0,856.4,139.0C859.8,139.0,863.2,138.3,866.7,137.7C870.1,137.1,873.5,134.5,876.9,134.5C880.3,134.5,883.8,136.1,887.2,136.1C890.6,136.1,894.0,135.2,897.4,134.6C900.8,134.0,904.3,132.1,907.7,132.0C911.1,131.9,914.5,131.9,917.9,131.9C921.4,131.9,924.8,131.9,928.2,131.8C931.6,131.7,935.0,127.4,938.4,126.8C941.9,126.2,945.3,125.8,948.7,125.8C952.1,125.8,955.5,128.4,958.9,128.8C962.4,129.2,965.8,129.3,969.2,129.6" fill="none" stroke="#36B37E" stroke-width="1.35"/>
<path d="M46.4,217.3C49.8,217.2,53.2,217.1,56.7,217.0C60.1,217.0,63.5,216.9,66.9,216.9C70.3,216.9,73.7,216.9,77.2,216.9C80.6,216.9,84.0,206.9,87.4,206.9C90.8,206.9,94.2,219.2,97.7,219.2C101.1,219.2,104.5,219.1,107.9,219.0C111.3,218.9,114.8,218.7,118.2,218.6C121.6,218.5,125.0,218.4,128.4,218.2C131.8,218.0,135.3,217.2,138.7,217.2C142.1,217.2,145.5,217.3,148.9,217.3C152.4,217.3,155.8,217.4,159.2,217.4C162.6,217.5,166.0,217.5,169.4,217.5C172.9,217.5,176.3,217.5,179.7,217.5C183.1,217.5,186.5,217.4,189.9,217.4C193.4,217.4,196.8,217.4,200.2,217.4C203.6,217.4,207.0,217.5,210.5,217.5C213.9,217.6,217.3,217.8,220.7,217.8C224.1,217.8,227.5,214.7,231.0,213.5C234.4,212.3,237.8,210.3,241.2,210.3C244.6,210.3,248.0,212.4,251.5,213.7C254.9,215.0,258.3,217.9,261.7,217.9C265.1,217.9,268.6,217.8,272.0,217.8C275.4,217.8,278.8,217.8,282.2,217.8C285.6,217.8,289.1,217.9,292.5,217.9C295.9,217.9,299.3,218.0,302.7,218.0C306.2,218.0,309.6,218.0,313.0,218.0C316.4,218.0,319.8,217.9,323.2,217.9C326.7,217.9,330.1,217.8,333.5,217.8C336.9,217.8,340.3,217.8,343.7,217.7C347.2,217.6,350.6,217.4,354.0,217.3C357.4,217.2,360.8,217.3,364.3,217.1C367.7,216.9,371.1,209.0,374.5,209.0C377.9,209.0,381.3,216.9,384.8,216.9C388.2,216.9,391.6,216.9,395.0,216.9C398.4,216.9,401.8,216.9,405.3,216.9C408.7,216.9,412.1,217.0,415.5,217.0C418.9,217.1,422.4,217.3,425.8,217.3C429.2,217.3,432.6,211.2,436.0,211.2C439.4,211.2,442.9,218.3,446.3,218.3C449.7,218.3,453.1,218.1,456.5,218.0C460.0,217.9,463.4,217.8,466.8,217.7C470.2,217.6,473.6,217.4,477.0,217.4C480.5,217.4,483.9,217.4,487.3,217.3C490.7,217.3,494.1,210.0,497.5,210.0C501.0,210.0,504.4,217.7,507.8,217.7C511.2,217.7,514.6,217.7,518.1,217.7C521.5,217.7,524.9,217.7,528.3,217.6C531.7,217.6,535.1,217.5,538.6,217.4C542.0,217.3,545.4,217.2,548.8,217.2C552.2,217.2,555.6,217.2,559.1,217.2C562.5,217.2,565.9,217.3,569.3,217.3C572.7,217.3,576.2,217.4,579.6,217.4C583.0,217.4,586.4,217.4,589.8,217.4C593.2,217.4,596.7,217.3,600.1,217.3C603.5,217.3,606.9,217.3,610.3,217.3C613.8,217.2,617.2,205.7,620.6,205.7C624.0,205.7,627.4,219.3,630.8,219.3C634.3,219.3,637.7,212.8,641.1,212.8C644.5,212.8,647.9,219.6,651.3,219.6C654.8,219.6,658.2,219.1,661.6,218.9C665.0,218.6,668.4,218.3,671.9,218.0C675.3,217.7,678.7,217.4,682.1,217.3C685.5,217.2,688.9,217.1,692.4,217.1C695.8,217.1,699.2,217.0,702.6,217.0C706.0,217.0,709.4,217.1,712.9,217.1C716.3,217.1,719.7,217.1,723.1,217.1C726.5,217.1,730.0,217.0,733.4,217.0C736.8,216.9,740.2,210.6,743.6,210.6C747.0,210.6,750.5,216.6,753.9,216.6C757.3,216.7,760.7,216.7,764.1,216.7C767.6,216.8,771.0,216.9,774.4,216.9C777.8,217.0,781.2,217.1,784.6,217.1C788.1,217.1,791.5,210.6,794.9,210.6C798.3,210.6,801.7,217.9,805.1,217.9C808.6,217.9,812.0,217.7,815.4,217.7C818.8,217.6,822.2,217.5,825.7,217.5C829.1,217.5,832.5,217.5,835.9,217.5C839.3,217.5,842.7,210.6,846.2,210.6C849.6,210.6,853.0,217.3,856.4,217.4C859.8,217.4,863.2,217.5,866.7,217.5C870.1,217.5,873.5,217.4,876.9,217.4C880.3,217.4,883.8,217.4,887.2,217.4C890.6,217.4,894.0,217.5,897.4,217.5C900.8,217.5,904.3,217.6,907.7,217.7C911.1,217.8,914.5,217.9,917.9,218.0C921.4,218.0,924.8,218.1,928.2,218.1C931.6,218.1,935.0,218.1,938.4,218.1C941.9,218.1,945.3,218.0,948.7,218.0C952.1,217.9,955.5,217.8,958.9,217.8C962.4,217.8,965.8,217.8,969.2,217.8" fill="none" stroke="#FF991F" stroke-width="1.35"/>
<path d="M46.4,234.4C49.8,234.3,53.2,234.0,56.7,233.9C60.1,233.8,63.5,233.7,66.9,233.7C70.3,233.7,73.7,233.9,77.2,234.0C80.6,234.1,84.0,234.4,87.4,234.5C90.8,234.7,94.2,234.8,97.7,234.8C101.1,234.8,104.5,234.7,107.9,234.6C111.3,234.5,114.8,234.3,118.2,234.2C121.6,234.1,125.0,233.9,128.4,233.9C131.8,233.9,135.3,234.1,138.7,234.2C142.1,234.3,145.5,234.5,148.9,234.6C152.4,234.7,155.8,234.8,159.2,234.8C162.6,234.8,166.0,234.6,169.4,234.5C172.9,234.4,176.3,234.0,179.7,233.9C183.1,233.8,186.5,233.6,189.9,233.6C193.4,233.6,196.8,233.8,200.2,233.9C203.6,234.0,207.0,234.3,210.5,234.5C213.9,234.6,217.3,234.9,220.7,234.9C224.1,234.9,227.5,234.8,231.0,234.7C234.4,234.6,237.8,234.5,241.2,234.1C244.6,233.8,248.0,227.5,251.5,227.5C254.9,227.5,258.3,233.6,261.7,234.0C265.1,234.4,268.6,234.5,272.0,234.6C275.4,234.8,278.8,235.0,282.2,235.0C285.6,235.0,289.1,234.9,292.5,234.8C295.9,234.7,299.3,234.3,302.7,234.1C306.2,233.9,309.6,233.5,313.0,233.5C316.4,233.5,319.8,233.6,323.2,233.7C326.7,233.7,330.1,234.1,333.5,234.3C336.9,234.5,340.3,234.9,343.7,234.9C347.2,234.9,350.6,234.8,354.0,234.8C357.4,234.8,360.8,234.6,364.3,234.3C367.7,233.9,371.1,226.0,374.5,226.0C377.9,226.0,381.3,233.4,384.8,233.8C388.2,234.2,391.6,234.2,395.0,234.4C398.4,234.6,401.8,235.0,405.3,235.0C408.7,235.0,412.1,235.0,415.5,235.0C418.9,235.0,422.4,234.7,425.8,234.4C429.2,234.2,432.6,233.8,436.0,233.7C439.4,233.6,442.9,233.6,446.3,233.6C449.7,233.6,453.1,233.8,456.5,234.0C460.0,234.2,463.4,234.6,466.8,234.7C470.2,234.8,473.6,234.9,477.0,234.9C480.5,234.9,483.9,234.7,487.3,234.4C490.7,234.2,494.1,226.6,497.5,226.6C501.0,226.6,504.4,233.4,507.8,233.7C511.2,234.0,514.6,233.9,518.1,234.1C521.5,234.3,524.9,234.7,528.3,234.8C531.7,234.9,535.1,235.0,538.6,235.0C542.0,235.0,545.4,234.8,548.8,234.7C552.2,234.5,555.6,234.2,559.1,234.0C562.5,233.9,565.9,233.7,569.3,233.7C572.7,233.7,576.2,233.8,579.6,233.9C583.0,234.1,586.4,234.3,589.8,234.5C593.2,234.6,596.7,234.7,600.1,234.7C603.5,234.7,606.9,234.6,610.3,234.5C613.8,234.4,617.2,234.1,620.6,234.0C624.0,233.9,627.4,233.9,630.8,233.7C634.3,233.6,637.7,226.6,641.1,226.6C644.5,226.6,647.9,234.4,651.3,234.6C654.8,234.8,658.2,234.9,661.6,234.9C665.0,234.9,668.4,234.8,671.9,234.7C675.3,234.6,678.7,234.3,682.1,234.2C685.5,234.1,688.9,233.9,692.4,233.9C695.8,233.9,699.2,234.0,702.6,234.1C706.0,234.2,709.4,234.4,712.9,234.5C716.3,234.6,719.7,234.7,723.1,234.7C726.5,234.7,730.0,234.6,733.4,234.4C736.8,234.3,740.2,227.5,743.6,227.5C747.0,227.5,750.5,233.5,753.9,233.7C757.3,233.9,760.7,233.9,764.1,234.0C767.6,234.1,771.0,234.4,774.4,234.5C777.8,234.7,781.2,234.9,784.6,234.9C788.1,234.9,791.5,234.8,794.9,234.7C798.3,234.6,801.7,234.3,805.1,234.2C808.6,234.0,812.0,233.9,815.4,233.9C818.8,233.9,822.2,234.0,825.7,234.1C829.1,234.2,832.5,234.6,835.9,234.6C839.3,234.6,842.7,227.5,846.2,227.5C849.6,227.5,853.0,234.6,856.4,234.6C859.8,234.6,863.2,234.1,866.7,233.9C870.1,233.8,873.5,233.6,876.9,233.6C880.3,233.6,883.8,233.7,887.2,233.8C890.6,233.9,894.0,234.3,897.4,234.5C900.8,234.6,904.3,234.9,907.7,234.9C911.1,234.9,914.5,234.8,917.9,234.8C921.4,234.7,924.8,234.4,928.2,234.2C931.6,234.0,935.0,233.8,938.4,233.8C941.9,233.8,945.3,233.8,948.7,233.9C952.1,234.0,955.5,234.4,958.9,234.5C962.4,234.7,965.8,234.9,969.2,235.0" fill="none" stroke="#FFC400" stroke-width="1.35"/>
<path d="M46.4,244.3C49.8,244.1,53.2,243.7,56.7,243.6C60.1,243.4,63.5,243.2,66.9,243.2C70.3,243.2,73.7,243.4,77.2,243.5C80.6,243.7,84.0,244.0,87.4,244.2C90.8,244.4,94.2,244.6,97.7,244.6C101.1,244.6,104.5,244.5,107.9,244.4C111.3,244.3,114.8,244.0,118.2,243.8C121.6,243.6,125.0,243.4,128.4,243.4C131.8,243.4,135.3,243.5,138.7,243.6C142.1,243.7,145.5,244.1,148.9,244.3C152.4,244.4,155.8,244.7,159.2,244.7C162.6,244.7,166.0,244.6,169.4,244.5C172.9,244.4,176.3,244.1,179.7,243.9C183.1,243.7,186.5,243.4,189.9,243.4C193.4,243.4,196.8,243.4,200.2,243.4C203.6,243.5,207.0,243.8,210.5,244.0C213.9,244.1,217.3,244.5,220.7,244.5C224.1,244.5,227.5,244.4,231.0,244.4C234.4,244.4,237.8,244.2,241.2,243.9C244.6,243.6,248.0,237.6,251.5,237.6C254.9,237.6,258.3,243.3,261.7,243.6C265.1,243.9,268.6,243.9,272.0,244.1C275.4,244.3,278.8,244.6,282.2,244.6C285.6,244.6,289.1,244.6,292.5,244.6C295.9,244.5,299.3,244.2,302.7,244.1C306.2,243.9,309.6,243.6,313.0,243.6C316.4,243.5,319.8,243.5,323.2,243.5C326.7,243.5,330.1,243.8,333.5,243.9C336.9,244.1,340.3,244.3,343.7,244.3C347.2,244.3,350.6,244.3,354.0,244.3C357.4,244.3,360.8,244.2,364.3,243.9C367.7,243.6,371.1,235.8,374.5,235.8C377.9,235.8,381.3,243.3,384.8,243.6C388.2,243.9,391.6,243.9,395.0,244.0C398.4,244.2,401.8,244.5,405.3,244.5C408.7,244.5,412.1,244.5,415.5,244.5C418.9,244.5,422.4,244.2,425.8,244.1C429.2,243.9,432.6,243.6,436.0,243.6C439.4,243.6,442.9,243.6,446.3,243.6C449.7,243.6,453.1,243.9,456.5,244.0C460.0,244.1,463.4,244.4,466.8,244.4C470.2,244.4,473.6,244.4,477.0,244.4C480.5,244.4,483.9,244.2,487.3,243.9C490.7,243.6,494.1,236.4,497.5,236.4C501.0,236.4,504.4,243.1,507.8,243.4C511.2,243.7,514.6,243.8,518.1,243.9C521.5,244.1,524.9,244.5,528.3,244.5C531.7,244.6,535.1,244.6,538.6,244.6C542.0,244.6,545.4,244.3,548.8,244.2C552.2,244.0,555.6,243.7,559.1,243.6C562.5,243.5,565.9,243.5,569.3,243.5C572.7,243.5,576.2,243.8,579.6,243.9C583.0,244.1,586.4,244.4,589.8,244.5C593.2,244.6,596.7,244.6,600.1,244.6C603.5,244.6,606.9,244.3,610.3,244.1C613.8,243.9,617.2,243.6,620.6,243.4C624.0,243.3,627.4,243.4,630.8,243.2C634.3,243.1,637.7,236.4,641.1,236.4C644.5,236.4,647.9,244.2,651.3,244.4C654.8,244.6,658.2,244.7,661.6,244.7C665.0,244.7,668.4,244.5,671.9,244.4C675.3,244.2,678.7,243.9,682.1,243.7C685.5,243.6,688.9,243.4,692.4,243.4C695.8,243.4,699.2,243.6,702.6,243.7C706.0,243.9,709.4,244.2,712.9,244.4C716.3,244.5,719.7,244.7,723.1,244.7C726.5,244.7,730.0,244.6,733.4,244.4C736.8,244.2,740.2,237.6,743.6,237.6C747.0,237.6,750.5,243.1,753.9,243.2C757.3,243.4,760.7,243.3,764.1,243.4C767.6,243.6,771.0,243.9,774.4,244.1C777.8,244.3,781.2,244.6,784.6,244.6C788.1,244.6,791.5,244.5,794.9,244.5C798.3,244.4,801.7,244.1,805.1,243.9C808.6,243.7,812.0,243.5,815.4,243.5C818.8,243.5,822.2,243.5,825.7,243.6C829.1,243.7,832.5,244.2,835.9,244.2C839.3,244.2,842.7,237.6,846.2,237.6C849.6,237.6,853.0,244.5,856.4,244.5C859.8,244.5,863.2,244.1,866.7,244.0C870.1,243.8,873.5,243.4,876.9,243.4C880.3,243.4,883.8,243.4,887.2,243.4C890.6,243.4,894.0,243.7,897.4,243.9C900.8,244.1,904.3,244.4,907.7,244.4C911.1,244.4,914.5,244.4,917.9,244.4C921.4,244.4,924.8,244.1,928.2,244.0C931.6,243.8,935.0,243.6,938.4,243.6C941.9,243.6,945.3,243.6,948.7,243.6C952.1,243.6,955.5,243.9,958.9,244.1C962.4,244.2,965.8,244.4,969.2,244.5" fill="none" stroke="#4C9AFF" stroke-width="1.35"/>
<path d="M46.4,249.6C49.8,249.4,53.2,249.2,56.7,249.0C60.1,248.9,63.5,248.8,66.9,248.8C70.3,248.8,73.7,248.9,77.2,249.0C80.6,249.1,84.0,249.4,87.4,249.5C90.8,249.6,94.2,249.8,97.7,249.8C101.1,249.8,104.5,249.6,107.9,249.5C111.3,249.4,114.8,249.1,118.2,249.0C121.6,248.9,125.0,248.7,128.4,248.7C131.8,248.7,135.3,248.9,138.7,249.0C142.1,249.2,145.5,249.5,148.9,249.6C152.4,249.8,155.8,249.9,159.2,249.9C162.6,249.9,166.0,249.8,169.4,249.7C172.9,249.6,176.3,249.3,179.7,249.1C183.1,249.0,186.5,248.7,189.9,248.7C193.4,248.7,196.8,248.9,200.2,249.0C203.6,249.1,207.0,249.4,210.5,249.5C213.9,249.7,217.3,249.9,220.7,249.9C224.1,249.9,227.5,249.7,231.0,249.6C234.4,249.5,237.8,249.4,241.2,249.0C244.6,248.6,248.0,242.5,251.5,242.5C254.9,242.5,258.3,248.4,261.7,248.8C265.1,249.2,268.6,249.3,272.0,249.5C275.4,249.7,278.8,250.0,282.2,250.0C285.6,250.0,289.1,249.9,292.5,249.9C295.9,249.8,299.3,249.4,302.7,249.2C306.2,249.1,309.6,248.7,313.0,248.7C316.4,248.7,319.8,248.8,323.2,248.8C326.7,248.9,330.1,249.2,333.5,249.4C336.9,249.6,340.3,249.9,343.7,249.9C347.2,249.9,350.6,249.9,354.0,249.8C357.4,249.8,360.8,249.6,364.3,249.2C367.7,248.8,371.1,241.0,374.5,241.0C377.9,241.0,381.3,248.3,384.8,248.6C388.2,249.0,391.6,249.0,395.0,249.2C398.4,249.4,401.8,249.8,405.3,249.8C408.7,249.9,412.1,249.9,415.5,249.9C418.9,249.9,422.4,249.6,425.8,249.5C429.2,249.3,432.6,248.9,436.0,248.9C439.4,248.8,442.9,248.8,446.3,248.8C449.7,248.8,453.1,249.0,456.5,249.2C460.0,249.4,463.4,249.7,466.8,249.8C470.2,249.9,473.6,249.9,477.0,249.9C480.5,249.9,483.9,249.7,487.3,249.4C490.7,249.2,494.1,242.0,497.5,242.0C501.0,242.0,504.4,248.4,507.8,248.6C511.2,248.9,514.6,248.9,518.1,249.0C521.5,249.2,524.9,249.5,528.3,249.6C531.7,249.7,535.1,249.9,538.6,249.9C542.0,249.9,545.4,249.7,548.8,249.5C552.2,249.4,555.6,249.1,559.1,249.0C562.5,248.9,565.9,248.8,569.3,248.8C572.7,248.8,576.2,249.0,579.6,249.1C583.0,249.3,586.4,249.6,589.8,249.7C593.2,249.8,596.7,249.9,600.1,249.9C603.5,249.9,606.9,249.7,610.3,249.6C613.8,249.4,617.2,249.1,620.6,249.0C624.0,248.9,627.4,248.9,630.8,248.7C634.3,248.5,637.7,241.3,641.1,241.3C644.5,241.3,647.9,249.3,651.3,249.5C654.8,249.7,658.2,249.8,661.6,249.8C665.0,249.8,668.4,249.6,671.9,249.5C675.3,249.4,678.7,249.1,682.1,249.0C685.5,248.9,688.9,248.8,692.4,248.8C695.8,248.8,699.2,249.0,702.6,249.1C706.0,249.2,709.4,249.5,712.9,249.6C716.3,249.8,719.7,249.9,723.1,249.9C726.5,249.9,730.0,249.8,733.4,249.6C736.8,249.4,740.2,242.5,743.6,242.5C747.0,242.5,750.5,248.6,753.9,248.7C757.3,248.9,760.7,248.9,764.1,249.0C767.6,249.1,771.0,249.4,774.4,249.5C777.8,249.6,781.2,249.8,784.6,249.8C788.1,249.8,791.5,249.7,794.9,249.5C798.3,249.4,801.7,249.1,805.1,249.0C808.6,248.9,812.0,248.7,815.4,248.7C818.8,248.7,822.2,248.9,825.7,249.0C829.1,249.1,832.5,249.6,835.9,249.6C839.3,249.6,842.7,242.5,846.2,242.5C849.6,242.5,853.0,249.8,856.4,249.8C859.8,249.8,863.2,249.3,866.7,249.1C870.1,249.0,873.5,248.7,876.9,248.7C880.3,248.7,883.8,248.8,887.2,248.9C890.6,249.0,894.0,249.3,897.4,249.4C900.8,249.6,904.3,249.9,907.7,249.9C911.1,249.9,914.5,249.8,917.9,249.7C921.4,249.6,924.8,249.3,928.2,249.1C931.6,248.9,935.0,248.6,938.4,248.6C941.9,248.6,945.3,248.7,948.7,248.8C952.1,248.8,955.5,249.2,958.9,249.4C962.4,249.6,965.8,249.8,969.2,250.0" fill="none" stroke="#C9372C" stroke-width="1.35"/>
<path d="M46.4,253.6C49.8,253.4,53.2,253.1,56.7,253.0C60.1,252.9,63.5,252.7,66.9,252.7C70.3,252.7,73.7,252.9,77.2,253.0C80.6,253.1,84.0,253.4,87.4,253.6C90.8,253.7,94.2,253.9,97.7,253.9C101.1,253.9,104.5,253.8,107.9,253.6C111.3,253.5,114.8,253.2,118.2,253.0C121.6,252.9,125.0,252.7,128.4,252.7C131.8,252.7,135.3,252.8,138.7,252.9C142.1,253.1,145.5,253.4,148.9,253.5C152.4,253.7,155.8,253.9,159.2,253.9C162.6,253.9,166.0,253.8,169.4,253.7C172.9,253.6,176.3,253.3,179.7,253.1C183.1,252.9,186.5,252.7,189.9,252.7C193.4,252.7,196.8,252.8,200.2,252.9C203.6,253.0,207.0,253.3,210.5,253.5C213.9,253.6,217.3,253.9,220.7,253.9C224.1,253.9,227.5,253.8,231.0,253.7C234.4,253.7,237.8,253.3,241.2,253.2C244.6,253.0,248.0,252.7,251.5,252.7C254.9,252.7,258.3,252.8,261.7,252.8C265.1,252.9,268.6,253.2,272.0,253.4C275.4,253.6,278.8,253.9,282.2,253.9C285.6,253.9,289.1,253.8,292.5,253.8C295.9,253.7,299.3,253.4,302.7,253.2C306.2,253.1,309.6,252.8,313.0,252.8C316.4,252.8,319.8,252.8,323.2,252.8C326.7,252.8,330.1,253.2,333.5,253.3C336.9,253.5,340.3,253.8,343.7,253.8C347.2,253.8,350.6,253.8,354.0,253.8C357.4,253.8,360.8,253.5,364.3,253.3C367.7,253.1,371.1,252.8,374.5,252.8C377.9,252.8,381.3,252.8,384.8,252.8C388.2,252.8,391.6,253.1,395.0,253.3C398.4,253.5,401.8,253.8,405.3,253.8C408.7,253.8,412.1,253.8,415.5,253.8C418.9,253.8,422.4,253.5,425.8,253.3C429.2,253.2,432.6,252.8,436.0,252.8C439.4,252.8,442.9,252.8,446.3,252.8C449.7,252.8,453.1,253.1,456.5,253.2C460.0,253.4,463.4,253.7,466.8,253.8C470.2,253.8,473.6,253.9,477.0,253.9C480.5,253.9,483.9,253.6,487.3,253.4C490.7,253.2,494.1,252.9,497.5,252.8C501.0,252.8,504.4,252.7,507.8,252.7C511.2,252.7,514.6,253.0,518.1,253.2C521.5,253.3,524.9,253.7,528.3,253.7C531.7,253.8,535.1,253.9,538.6,253.9C542.0,253.9,545.4,253.6,548.8,253.5C552.2,253.3,555.6,253.0,559.1,252.9C562.5,252.8,565.9,252.7,569.3,252.7C572.7,252.7,576.2,252.9,579.6,253.1C583.0,253.3,586.4,253.6,589.8,253.7C593.2,253.8,596.7,253.9,600.1,253.9C603.5,253.9,606.9,253.7,610.3,253.5C613.8,253.4,617.2,253.1,620.6,252.9C624.0,252.8,627.4,252.7,630.8,252.7C634.3,252.7,637.7,252.9,641.1,253.0C644.5,253.2,647.9,253.5,651.3,253.6C654.8,253.8,658.2,253.9,661.6,253.9C665.0,253.9,668.4,253.7,671.9,253.6C675.3,253.4,678.7,253.1,682.1,253.0C685.5,252.9,688.9,252.7,692.4,252.7C695.8,252.7,699.2,252.9,702.6,253.0C706.0,253.1,709.4,253.4,712.9,253.6C716.3,253.7,719.7,253.9,723.1,253.9C726.5,253.9,730.0,253.8,733.4,253.6C736.8,253.5,740.2,253.2,743.6,253.0C747.0,252.9,750.5,252.7,753.9,252.7C757.3,252.7,760.7,252.8,764.1,252.9C767.6,253.1,771.0,253.4,774.4,253.5C777.8,253.7,781.2,253.9,784.6,253.9C788.1,253.9,791.5,253.8,794.9,253.7C798.3,253.6,801.7,253.3,805.1,253.1C808.6,252.9,812.0,252.7,815.4,252.7C818.8,252.7,822.2,252.8,825.7,252.9C829.1,253.0,832.5,253.3,835.9,253.5C839.3,253.6,842.7,253.9,846.2,253.9C849.6,253.9,853.0,253.8,856.4,253.7C859.8,253.7,863.2,253.3,866.7,253.2C870.1,253.0,873.5,252.7,876.9,252.7C880.3,252.7,883.8,252.8,887.2,252.8C890.6,252.9,894.0,253.2,897.4,253.4C900.8,253.6,904.3,253.9,907.7,253.9C911.1,253.9,914.5,253.8,917.9,253.8C921.4,253.7,924.8,253.4,928.2,253.2C931.6,253.1,935.0,252.8,938.4,252.8C941.9,252.8,945.3,252.8,948.7,252.8C952.1,252.8,955.5,253.2,958.9,253.3C962.4,253.5,965.8,253.7,969.2,253.8" fill="none" stroke="#626F86" stroke-width="1.35"/>
<g stroke="#C1C7D0" stroke-width="0.5">
<path d="M97.7,254.5V256.5M200.2,254.5V256.5M292.5,254.5V256.5M395,254.5V256.5M518,254.5V256.5M610.3,254.5V256.5M712.9,254.5V256.5M825.6,254.5V256.5M917.9,254.5V256.5"/>
</g>
</svg>
<div class="a ax" style="left:31px;top:111px">2400</div>
<div class="a ax" style="left:31px;top:146px">1800</div>
<div class="a ax" style="left:31px;top:181px">1200</div>
<div class="a ax" style="left:34px;top:215px">600</div>
<div class="a ax" style="left:39.5px;top:250px">0</div>
<div class="a ax" style="left:89.5px;top:260.5px">20 Feb</div>
<div class="a ax" style="left:191px;top:260.5px;font-weight:bold;color:#172B4D">Mar '24</div>
<div class="a ax" style="left:284.5px;top:260.5px">10 Mar</div>
<div class="a ax" style="left:387px;top:260.5px">20 Mar</div>
<div class="a ax" style="left:510px;top:260.5px;font-weight:bold;color:#172B4D">Apr '24</div>
<div class="a ax" style="left:603.5px;top:260.5px">10 Apr</div>
<div class="a ax" style="left:705.5px;top:260.5px">20 Apr</div>
<div class="a ax" style="left:817px;top:260.5px;font-weight:bold;color:#172B4D">May '24</div>
<div class="a ax" style="left:910px;top:260.5px">10 May</div>

<!-- legend -->
<div class="a dot" style="left:392.7px;top:269.9px;background:#36B37E"></div>
<div class="a lg" style="left:400px;top:269px">Up-to-date</div>
<div class="a dot" style="left:432.5px;top:269.9px;background:#FF991F"></div>
<div class="a lg" style="left:439.8px;top:269px">Expired</div>
<div class="a dot" style="left:464.5px;top:269.9px;background:#FFC400"></div>
<div class="a lg" style="left:471.5px;top:269px">Update in progress</div>
<div class="a dot" style="left:526.3px;top:269.9px;background:#4C9AFF"></div>
<div class="a lg" style="left:533.5px;top:269px">To review</div>
<div class="a dot" style="left:563.2px;top:269.9px;background:#C9372C"></div>
<div class="a lg" style="left:570.4px;top:269px">To archive</div>
<div class="a dot" style="left:602.3px;top:269.9px;background:#626F86"></div>
<div class="a lg" style="left:609px;top:269px">Excluded</div>

<!-- card 2 -->
<div class="a card" style="left:18px;top:297.5px;width:478px;height:200px"></div>
<div class="a ttl" style="left:26px;top:304.5px">Content status distribution</div>
<div class="a sub" style="left:26px;top:314px">Percentage of contents by status</div>
<svg class="a" style="left:0;top:0" width="999" height="489" viewBox="0 0 999 489">
<path d="M257.75,328.60A44.6,44.6 0 1 1 213.90,381.33L228.55,378.61A29.7,29.7 0 1 0 257.75,343.50Z" fill="#36B37E" stroke="#fff" stroke-width="0.8"/>
<path d="M213.90,381.33A44.6,44.6 0 0 1 222.89,345.37L234.54,354.67A29.7,29.7 0 0 0 228.55,378.61Z" fill="#FF991F" stroke="#fff" stroke-width="0.8"/>
<path d="M222.89,345.37A44.6,44.6 0 0 1 238.48,332.98L244.92,346.42A29.7,29.7 0 0 0 234.54,354.67Z" fill="#FFC400" stroke="#fff" stroke-width="0.8"/>
<path d="M238.48,332.98A44.6,44.6 0 0 1 248.71,329.53L251.73,344.12A29.7,29.7 0 0 0 244.92,346.42Z" fill="#4C9AFF" stroke="#fff" stroke-width="0.8"/>
<path d="M248.71,329.53A44.6,44.6 0 0 1 257.28,328.60L257.44,343.50A29.7,29.7 0 0 0 251.73,344.12Z" fill="#BF2600" stroke="#fff" stroke-width="0.8"/>
<path d="M257.28,328.60A44.6,44.6 0 0 1 257.75,328.60L257.75,343.50A29.7,29.7 0 0 0 257.44,343.50Z" fill="#626F86" stroke="#fff" stroke-width="0.8"/>
</svg>
<div class="a sd" style="left:220.1px;top:428.2px;background:#36B37E"></div>
<div class="a l2" style="left:225.7px;top:424.5px">Up-to-date</div>
<div class="a pc" style="left:270px;width:34.5px;top:424.5px">70%</div>
<div class="a sd" style="left:220.1px;top:441.7px;background:#FF991F"></div>
<div class="a l2" style="left:225.7px;top:438px">Expired</div>
<div class="a pc" style="left:270px;width:34.5px;top:438px">13%</div>
<div class="a sd" style="left:220.1px;top:455.2px;background:#FFC400"></div>
<div class="a l2" style="left:225.7px;top:451.5px">Update in progress</div>
<div class="a pc" style="left:270px;width:34.5px;top:451.5px">8%</div>
<div class="a sd" style="left:220.1px;top:468.7px;background:#4C9AFF"></div>
<div class="a l2" style="left:225.7px;top:465px">To review</div>
<div class="a pc" style="left:270px;width:34.5px;top:465px">4%</div>
<div class="a sd" style="left:220.1px;top:482.2px;background:#C9372C"></div>
<div class="a l2" style="left:225.7px;top:478.5px">To archive</div>
<div class="a pc" style="left:270px;width:34.5px;top:478.5px">3%</div>

<!-- card 3 -->
<div class="a card" style="left:503.5px;top:297.5px;width:478.3px;height:200px"></div>
<div class="a ttl" style="left:510.8px;top:304.5px">Content status count</div>
<div class="a sub" style="left:510.8px;top:314px">Count of contents by status</div>
<svg class="a" style="left:0;top:0" width="999" height="489" viewBox="0 0 999 489">
<g stroke="#EBECF0" stroke-width="0.7">
<path d="M555,337.4H964.6M555,352.6H964.6M555,367.8H964.6M555,383H964.6M555,398.2H964.6M555,413.4H964.6M555,428.6H964.6"/>
<path d="M555,428.6V431M657.4,428.6V431M759.8,428.6V431M862.2,428.6V431M964.6,428.6V431"/>
</g>
<rect x="555" y="339.3" width="388.9" height="9.8" rx="1" fill="#57B88C"/>
<rect x="555" y="354.6" width="74.2" height="9.9" rx="1" fill="#FFA345"/>
<rect x="555" y="369.9" width="43.8" height="9.8" rx="1" fill="#FFCA2B"/>
<rect x="555" y="385.1" width="23.2" height="9.8" rx="1" fill="#65A4FF"/>
<rect x="555" y="400.6" width="18" height="9.8" rx="1" fill="#CB4A2F"/>
<rect x="555" y="415.6" width="5.2" height="9.8" rx="1" fill="#6E7A90"/>
</svg>
<div class="a ax" style="left:500px;width:48.5px;text-align:right;top:341.5px">Up-to-date</div>
<div class="a ax" style="left:500px;width:48.5px;text-align:right;top:356.7px">Expired</div>
<div class="a ax" style="left:500px;width:51.5px;text-align:right;top:371.9px">Update in p...</div>
<div class="a ax" style="left:500px;width:48.5px;text-align:right;top:387.1px">To review</div>
<div class="a ax" style="left:500px;width:48.5px;text-align:right;top:402.5px">To archive</div>
<div class="a ax" style="left:500px;width:48.5px;text-align:right;top:418px">Excluded</div>
<div class="a ax" style="left:545px;width:20px;text-align:center;top:433px">0</div>
<div class="a ax" style="left:647.4px;width:20px;text-align:center;top:433px">400</div>
<div class="a ax" style="left:749.8px;width:20px;text-align:center;top:433px">800</div>
<div class="a ax" style="left:852.2px;width:20px;text-align:center;top:433px">1200</div>
<div class="a ax" style="left:954.6px;width:20px;text-align:center;top:433px">1600</div>

<div class="a sd" style="left:703.9px;top:455.9px;background:#36B37E"></div>
<div class="a l2" style="left:709.6px;top:452.2px">Up-to-date</div>
<div class="a pc" style="left:755px;width:35px;top:452.2px">1520</div>
<div class="a sd" style="left:703.9px;top:468.5px;background:#FF991F"></div>
<div class="a l2" style="left:709.6px;top:465.5px">Expired</div>
<div class="a pc" style="left:755px;width:35px;top:465.5px">290</div>
<div class="a sd" style="left:703.9px;top:482px;background:#FFC400"></div>
<div class="a l2" style="left:709.6px;top:479px">Update in progress</div>
<div class="a pc" style="left:755px;width:35px;top:479px">170</div>
</body></html>
